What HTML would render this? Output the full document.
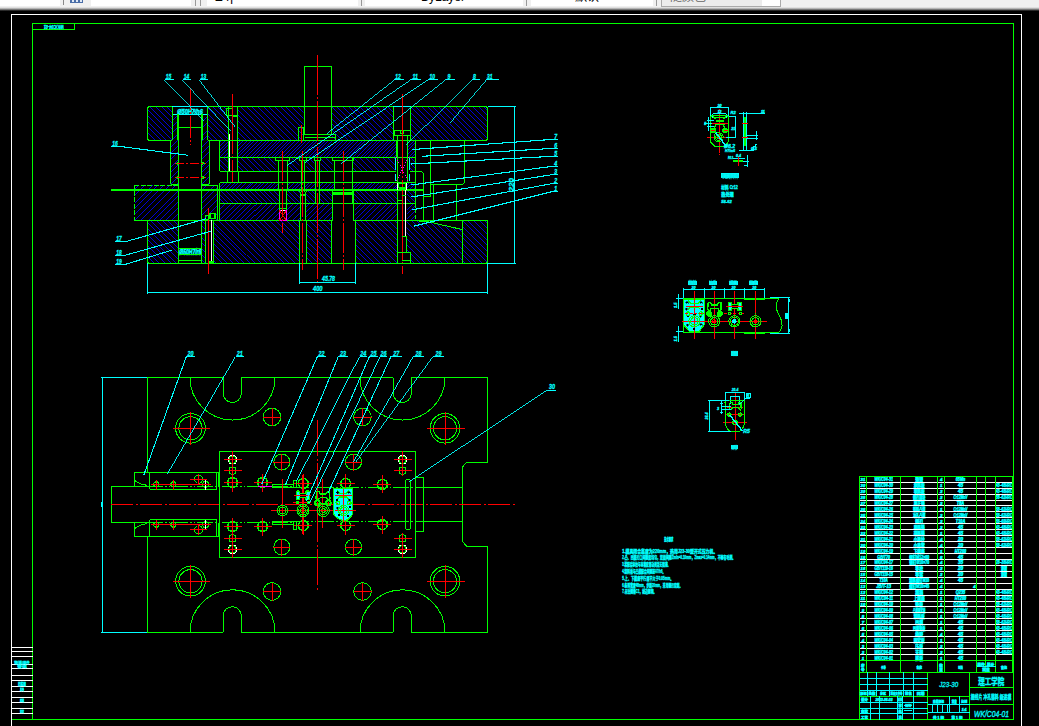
<!DOCTYPE html>
<html lang="zh"><head><meta charset="utf-8"><title>CAD</title>
<style>
html,body{margin:0;padding:0;background:#000;overflow:hidden}
body{width:1039px;height:726px;position:relative;font-family:"Liberation Sans","Noto Sans CJK SC",sans-serif}
#tb{position:absolute;left:0;top:0;width:1039px;height:11px;background:linear-gradient(#f0f0f0 0,#f0f0f0 7px,#cfcfcf 8px,#9a9a9a 9px,#555 10px,#000 11px);overflow:hidden}
#tb div{position:absolute;top:0;height:6px;background:#fff;overflow:hidden}
#tb span{position:absolute;font-size:12px;line-height:12px;top:-9px;color:#000;white-space:nowrap}
svg{position:absolute;left:0;top:0}
svg text{font-family:"Liberation Sans","Noto Sans CJK SC",sans-serif}
</style></head><body>
<svg width="1039" height="726" viewBox="0 0 1039 726" shape-rendering="crispEdges">
<clipPath id="ch1">
<polygon points="147.5,106.7 172.4,106.7 172.4,140.3 147.5,140.3"/>
<polygon points="207.5,106.7 228.2,106.7 228.2,140.3 207.5,140.3"/>
<polygon points="237.7,106.7 303.5,106.7 303.5,140.3 237.7,140.3"/>
<polygon points="331.5,106.7 393.4,106.7 393.4,140.3 331.5,140.3"/>
<polygon points="410.6,106.7 487.5,106.7 487.5,140.3 410.6,140.3"/>
<polygon points="219.5,157.3 228.2,157.3 228.2,171 219.5,171"/>
<polygon points="237.7,157.3 275.7,157.3 275.7,171 237.7,171"/>
<polygon points="289,157.3 299.4,157.3 299.4,171 289,171"/>
<polygon points="306.3,157.3 314.3,157.3 314.3,171 306.3,171"/>
<polygon points="320.7,157.3 332.4,157.3 332.4,171 320.7,171"/>
<polygon points="352.8,157.3 395.5,157.3 395.5,171 352.8,171"/>
<polygon points="409.5,157.3 415.4,157.3 415.4,171 409.5,171"/>
<polygon points="147.8,220.5 178.8,220.5 178.8,263.2 147.8,263.2"/>
<polygon points="213,220.5 299.4,220.5 299.4,263.2 213,263.2"/>
<polygon points="201.7,220.5 205.5,220.5 205.5,263.2 201.7,263.2"/>
<polygon points="306.9,220.5 331,220.5 331,263.2 306.9,263.2"/>
<polygon points="355.5,220.5 397.5,220.5 397.5,263.2 355.5,263.2"/>
<polygon points="406.5,220.5 427,221.5 461.6,229.4 462.3,263.2 410,263.2 410,252.8 406.5,252.8"/>
<polygon points="462.4,220.5 487.5,220.5 487.5,263.2 462.4,263.2"/>
</clipPath>
<path clip-path="url(#ch1)" d="M-14,106.7L142.5,263.2M-8.34,106.7L148.16,263.2M-2.68,106.7L153.82,263.2M2.98,106.7L159.48,263.2M8.64,106.7L165.14,263.2M14.3,106.7L170.8,263.2M19.96,106.7L176.46,263.2M25.62,106.7L182.12,263.2M31.28,106.7L187.78,263.2M36.94,106.7L193.44,263.2M42.6,106.7L199.1,263.2M48.26,106.7L204.76,263.2M53.92,106.7L210.42,263.2M59.58,106.7L216.08,263.2M65.24,106.7L221.74,263.2M70.9,106.7L227.4,263.2M76.56,106.7L233.06,263.2M82.22,106.7L238.72,263.2M87.88,106.7L244.38,263.2M93.54,106.7L250.04,263.2M99.2,106.7L255.7,263.2M104.86,106.7L261.36,263.2M110.52,106.7L267.02,263.2M116.18,106.7L272.68,263.2M121.84,106.7L278.34,263.2M127.5,106.7L284,263.2M133.16,106.7L289.66,263.2M138.82,106.7L295.32,263.2M144.48,106.7L300.98,263.2M150.14,106.7L306.64,263.2M155.8,106.7L312.3,263.2M161.46,106.7L317.96,263.2M167.12,106.7L323.62,263.2M172.78,106.7L329.28,263.2M178.44,106.7L334.94,263.2M184.1,106.7L340.6,263.2M189.76,106.7L346.26,263.2M195.42,106.7L351.92,263.2M201.08,106.7L357.58,263.2M206.74,106.7L363.24,263.2M212.4,106.7L368.9,263.2M218.06,106.7L374.56,263.2M223.72,106.7L380.22,263.2M229.38,106.7L385.88,263.2M235.04,106.7L391.54,263.2M240.7,106.7L397.2,263.2M246.36,106.7L402.86,263.2M252.02,106.7L408.52,263.2M257.68,106.7L414.18,263.2M263.34,106.7L419.84,263.2M269,106.7L425.5,263.2M274.66,106.7L431.16,263.2M280.32,106.7L436.82,263.2M285.98,106.7L442.48,263.2M291.64,106.7L448.14,263.2M297.3,106.7L453.8,263.2M302.96,106.7L459.46,263.2M308.62,106.7L465.12,263.2M314.28,106.7L470.78,263.2M319.94,106.7L476.44,263.2M325.6,106.7L482.1,263.2M331.26,106.7L487.76,263.2M336.92,106.7L493.42,263.2M342.58,106.7L499.08,263.2M348.24,106.7L504.74,263.2M353.9,106.7L510.4,263.2M359.56,106.7L516.06,263.2M365.22,106.7L521.72,263.2M370.88,106.7L527.38,263.2M376.54,106.7L533.04,263.2M382.2,106.7L538.7,263.2M387.86,106.7L544.36,263.2M393.52,106.7L550.02,263.2M399.18,106.7L555.68,263.2M404.84,106.7L561.34,263.2M410.5,106.7L567,263.2M416.16,106.7L572.66,263.2M421.82,106.7L578.32,263.2M427.48,106.7L583.98,263.2M433.14,106.7L589.64,263.2M438.8,106.7L595.3,263.2M444.46,106.7L600.96,263.2M450.12,106.7L606.62,263.2M455.78,106.7L612.28,263.2M461.44,106.7L617.94,263.2M467.1,106.7L623.6,263.2M472.76,106.7L629.26,263.2M478.42,106.7L634.92,263.2M484.08,106.7L640.58,263.2M489.74,106.7L646.24,263.2M495.4,106.7L651.9,263.2M501.06,106.7L657.56,263.2M506.72,106.7L663.22,263.2M512.38,106.7L668.88,263.2M518.04,106.7L674.54,263.2M523.7,106.7L680.2,263.2M529.36,106.7L685.86,263.2M535.02,106.7L691.52,263.2M540.68,106.7L697.18,263.2M546.34,106.7L702.84,263.2M552,106.7L708.5,263.2M557.66,106.7L714.16,263.2M563.32,106.7L719.82,263.2M568.98,106.7L725.48,263.2M574.64,106.7L731.14,263.2M580.3,106.7L736.8,263.2M585.96,106.7L742.46,263.2M591.62,106.7L748.12,263.2M597.28,106.7L753.78,263.2M602.94,106.7L759.44,263.2M608.6,106.7L765.1,263.2M614.26,106.7L770.76,263.2M619.92,106.7L776.42,263.2M625.58,106.7L782.08,263.2M631.24,106.7L787.74,263.2M636.9,106.7L793.4,263.2M642.56,106.7L799.06,263.2M648.22,106.7L804.72,263.2" stroke="#0000ff" stroke-width="0.85" fill="none"/>
<clipPath id="ch5">
<polygon points="170.3,140.3 178.6,140.3 178.6,184.5 170.3,184.5"/>
<polygon points="172.4,114.3 177.2,114.3 177.2,140.3 172.4,140.3"/>
<polygon points="202.8,114.3 207.5,114.3 207.5,140.3 202.8,140.3"/>
<polygon points="201.6,140.3 209.6,140.3 209.6,184.5 201.6,184.5"/>
<polygon points="134.2,185 178.8,185 178.8,220.5 134.2,220.5"/>
<polygon points="201.7,185 217.8,185 217.8,220.5 201.7,220.5"/>
</clipPath>
<path clip-path="url(#ch5)" d="M23,220.5L129.2,114.3M29.2,220.5L135.4,114.3M35.4,220.5L141.6,114.3M41.6,220.5L147.8,114.3M47.8,220.5L154,114.3M54,220.5L160.2,114.3M60.2,220.5L166.4,114.3M66.4,220.5L172.6,114.3M72.6,220.5L178.8,114.3M78.8,220.5L185,114.3M85,220.5L191.2,114.3M91.2,220.5L197.4,114.3M97.4,220.5L203.6,114.3M103.6,220.5L209.8,114.3M109.8,220.5L216,114.3M116,220.5L222.2,114.3M122.2,220.5L228.4,114.3M128.4,220.5L234.6,114.3M134.6,220.5L240.8,114.3M140.8,220.5L247,114.3M147,220.5L253.2,114.3M153.2,220.5L259.4,114.3M159.4,220.5L265.6,114.3M165.6,220.5L271.8,114.3M171.8,220.5L278,114.3M178,220.5L284.2,114.3M184.2,220.5L290.4,114.3M190.4,220.5L296.6,114.3M196.6,220.5L302.8,114.3M202.8,220.5L309,114.3M209,220.5L315.2,114.3M215.2,220.5L321.4,114.3M221.4,220.5L327.6,114.3M227.6,220.5L333.8,114.3M233.8,220.5L340,114.3M240,220.5L346.2,114.3M246.2,220.5L352.4,114.3M252.4,220.5L358.6,114.3M258.6,220.5L364.8,114.3M264.8,220.5L371,114.3M271,220.5L377.2,114.3M277.2,220.5L383.4,114.3M283.4,220.5L389.6,114.3M289.6,220.5L395.8,114.3M295.8,220.5L402,114.3M302,220.5L408.2,114.3M308.2,220.5L414.4,114.3M314.4,220.5L420.6,114.3M320.6,220.5L426.8,114.3M326.8,220.5L433,114.3" stroke="#0000ff" stroke-width="0.85" fill="none"/>
<clipPath id="ch2">
<polygon points="219.5,140.3 228.2,140.3 228.2,157.3 219.5,157.3"/>
<polygon points="237.7,140.3 396,140.3 396,157.3 237.7,157.3"/>
<polygon points="407.2,140.3 415.4,140.3 415.4,157.3 407.2,157.3"/>
<polygon points="219.5,182.5 278,182.5 278,190 219.5,190"/>
<polygon points="287.7,182.5 301.2,182.5 301.2,190 287.7,190"/>
<polygon points="304.9,182.5 315.5,182.5 315.5,190 304.9,190"/>
<polygon points="319.8,182.5 334,182.5 334,190 319.8,190"/>
<polygon points="352.8,182.5 397,182.5 397,190 352.8,190"/>
<polygon points="407,182.5 415.4,182.5 415.4,190 407,190"/>
</clipPath>
<path clip-path="url(#ch2)" d="M164.8,190L214.5,140.3M168.5,190L218.2,140.3M172.2,190L221.9,140.3M175.9,190L225.6,140.3M179.6,190L229.3,140.3M183.3,190L233,140.3M187,190L236.7,140.3M190.7,190L240.4,140.3M194.4,190L244.1,140.3M198.1,190L247.8,140.3M201.8,190L251.5,140.3M205.5,190L255.2,140.3M209.2,190L258.9,140.3M212.9,190L262.6,140.3M216.6,190L266.3,140.3M220.3,190L270,140.3M224,190L273.7,140.3M227.7,190L277.4,140.3M231.4,190L281.1,140.3M235.1,190L284.8,140.3M238.8,190L288.5,140.3M242.5,190L292.2,140.3M246.2,190L295.9,140.3M249.9,190L299.6,140.3M253.6,190L303.3,140.3M257.3,190L307,140.3M261,190L310.7,140.3M264.7,190L314.4,140.3M268.4,190L318.1,140.3M272.1,190L321.8,140.3M275.8,190L325.5,140.3M279.5,190L329.2,140.3M283.2,190L332.9,140.3M286.9,190L336.6,140.3M290.6,190L340.3,140.3M294.3,190L344,140.3M298,190L347.7,140.3M301.7,190L351.4,140.3M305.4,190L355.1,140.3M309.1,190L358.8,140.3M312.8,190L362.5,140.3M316.5,190L366.2,140.3M320.2,190L369.9,140.3M323.9,190L373.6,140.3M327.6,190L377.3,140.3M331.3,190L381,140.3M335,190L384.7,140.3M338.7,190L388.4,140.3M342.4,190L392.1,140.3M346.1,190L395.8,140.3M349.8,190L399.5,140.3M353.5,190L403.2,140.3M357.2,190L406.9,140.3M360.9,190L410.6,140.3M364.6,190L414.3,140.3M368.3,190L418,140.3M372,190L421.7,140.3M375.7,190L425.4,140.3M379.4,190L429.1,140.3M383.1,190L432.8,140.3M386.8,190L436.5,140.3M390.5,190L440.2,140.3M394.2,190L443.9,140.3M397.9,190L447.6,140.3M401.6,190L451.3,140.3M405.3,190L455,140.3M409,190L458.7,140.3M412.7,190L462.4,140.3M416.4,190L466.1,140.3M420.1,190L469.8,140.3M423.8,190L473.5,140.3M427.5,190L477.2,140.3M431.2,190L480.9,140.3M434.9,190L484.6,140.3M438.6,190L488.3,140.3M442.3,190L492,140.3M446,190L495.7,140.3M449.7,190L499.4,140.3M453.4,190L503.1,140.3M457.1,190L506.8,140.3M460.8,190L510.5,140.3M464.5,190L514.2,140.3M468.2,190L517.9,140.3" stroke="#0000ff" stroke-width="0.85" fill="none"/>
<clipPath id="ch4">
<polygon points="219.5,190 279.4,190 279.4,203.5 219.5,203.5"/>
<polygon points="286.3,190 300.5,190 300.5,203.5 286.3,203.5"/>
<polygon points="305.6,190 315.5,190 315.5,203.5 305.6,203.5"/>
<polygon points="319.8,190 332.4,190 332.4,203.5 319.8,203.5"/>
<polygon points="352.8,190 397.5,190 397.5,203.5 352.8,203.5"/>
<polygon points="407,190 415.4,190 415.4,203.5 407,203.5"/>
</clipPath>
<path clip-path="url(#ch4)" d="M201,190L214.5,203.5M205.8,190L219.3,203.5M210.6,190L224.1,203.5M215.4,190L228.9,203.5M220.2,190L233.7,203.5M225,190L238.5,203.5M229.8,190L243.3,203.5M234.6,190L248.1,203.5M239.4,190L252.9,203.5M244.2,190L257.7,203.5M249,190L262.5,203.5M253.8,190L267.3,203.5M258.6,190L272.1,203.5M263.4,190L276.9,203.5M268.2,190L281.7,203.5M273,190L286.5,203.5M277.8,190L291.3,203.5M282.6,190L296.1,203.5M287.4,190L300.9,203.5M292.2,190L305.7,203.5M297,190L310.5,203.5M301.8,190L315.3,203.5M306.6,190L320.1,203.5M311.4,190L324.9,203.5M316.2,190L329.7,203.5M321,190L334.5,203.5M325.8,190L339.3,203.5M330.6,190L344.1,203.5M335.4,190L348.9,203.5M340.2,190L353.7,203.5M345,190L358.5,203.5M349.8,190L363.3,203.5M354.6,190L368.1,203.5M359.4,190L372.9,203.5M364.2,190L377.7,203.5M369,190L382.5,203.5M373.8,190L387.3,203.5M378.6,190L392.1,203.5M383.4,190L396.9,203.5M388.2,190L401.7,203.5M393,190L406.5,203.5M397.8,190L411.3,203.5M402.6,190L416.1,203.5M407.4,190L420.9,203.5M412.2,190L425.7,203.5M417,190L430.5,203.5M421.8,190L435.3,203.5M426.6,190L440.1,203.5M431.4,190L444.9,203.5" stroke="#0000ff" stroke-width="0.85" fill="none"/>
<clipPath id="ch3">
<polygon points="219.5,203.5 279.4,203.5 279.4,220.5 219.5,220.5"/>
<polygon points="286.3,203.5 300.5,203.5 300.5,220.5 286.3,220.5"/>
<polygon points="305.6,203.5 332.4,203.5 332.4,220.5 305.6,220.5"/>
<polygon points="354.8,203.5 397.5,203.5 397.5,220.5 354.8,220.5"/>
<polygon points="407,203.5 415.4,203.5 415.4,220.5 407,220.5"/>
</clipPath>
<path clip-path="url(#ch3)" d="M197.5,220.5L214.5,203.5M202.7,220.5L219.7,203.5M207.9,220.5L224.9,203.5M213.1,220.5L230.1,203.5M218.3,220.5L235.3,203.5M223.5,220.5L240.5,203.5M228.7,220.5L245.7,203.5M233.9,220.5L250.9,203.5M239.1,220.5L256.1,203.5M244.3,220.5L261.3,203.5M249.5,220.5L266.5,203.5M254.7,220.5L271.7,203.5M259.9,220.5L276.9,203.5M265.1,220.5L282.1,203.5M270.3,220.5L287.3,203.5M275.5,220.5L292.5,203.5M280.7,220.5L297.7,203.5M285.9,220.5L302.9,203.5M291.1,220.5L308.1,203.5M296.3,220.5L313.3,203.5M301.5,220.5L318.5,203.5M306.7,220.5L323.7,203.5M311.9,220.5L328.9,203.5M317.1,220.5L334.1,203.5M322.3,220.5L339.3,203.5M327.5,220.5L344.5,203.5M332.7,220.5L349.7,203.5M337.9,220.5L354.9,203.5M343.1,220.5L360.1,203.5M348.3,220.5L365.3,203.5M353.5,220.5L370.5,203.5M358.7,220.5L375.7,203.5M363.9,220.5L380.9,203.5M369.1,220.5L386.1,203.5M374.3,220.5L391.3,203.5M379.5,220.5L396.5,203.5M384.7,220.5L401.7,203.5M389.9,220.5L406.9,203.5M395.1,220.5L412.1,203.5M400.3,220.5L417.3,203.5M405.5,220.5L422.5,203.5M410.7,220.5L427.7,203.5M415.9,220.5L432.9,203.5M421.1,220.5L438.1,203.5M426.3,220.5L443.3,203.5M431.5,220.5L448.5,203.5M436.7,220.5L453.7,203.5" stroke="#0000ff" stroke-width="0.85" fill="none"/>
<line x1="11" y1="14.5" x2="1021.5" y2="14.5" stroke="#ffffff" stroke-width="1"/>
<line x1="11.5" y1="14" x2="11.5" y2="726" stroke="#ffffff" stroke-width="1"/>
<line x1="1021" y1="14" x2="1021" y2="726" stroke="#ffffff" stroke-width="1"/>
<line x1="32" y1="23.5" x2="1013.5" y2="23.5" stroke="#00ff00" stroke-width="1"/>
<line x1="32.5" y1="23" x2="32.5" y2="719.5" stroke="#00ff00" stroke-width="1"/>
<line x1="1013" y1="23" x2="1013" y2="719.5" stroke="#00ff00" stroke-width="1"/>
<line x1="12" y1="719.5" x2="1013.5" y2="719.5" stroke="#00ff00" stroke-width="1"/>
<rect x="32.5" y="23.5" width="42" height="6" stroke="#00ff00" stroke-width="1" fill="none"/>
<text x="53.75" y="27.9" font-size="4.6" fill="#00ffff" text-anchor="middle" font-weight="bold" font-style="italic" transform="rotate(180 53.75 26.3)" stroke="#00ffff" stroke-width="0.35" textLength="20" lengthAdjust="spacingAndGlyphs">WK/C04-01</text>
<line x1="12" y1="647.5" x2="33" y2="647.5" stroke="#ffffff" stroke-width="1"/>
<line x1="12" y1="651.5" x2="33" y2="651.5" stroke="#ffffff" stroke-width="1"/>
<line x1="12" y1="656.5" x2="33" y2="656.5" stroke="#ffffff" stroke-width="1"/>
<line x1="12" y1="664.5" x2="33" y2="664.5" stroke="#ffffff" stroke-width="1"/>
<line x1="12" y1="668.5" x2="33" y2="668.5" stroke="#ffffff" stroke-width="1"/>
<line x1="12" y1="675.5" x2="33" y2="675.5" stroke="#ffffff" stroke-width="1"/>
<line x1="12" y1="680.5" x2="33" y2="680.5" stroke="#ffffff" stroke-width="1"/>
<line x1="12" y1="686.5" x2="33" y2="686.5" stroke="#ffffff" stroke-width="1"/>
<line x1="12" y1="691.5" x2="33" y2="691.5" stroke="#ffffff" stroke-width="1"/>
<line x1="12" y1="697.5" x2="33" y2="697.5" stroke="#ffffff" stroke-width="1"/>
<line x1="12" y1="702.5" x2="33" y2="702.5" stroke="#ffffff" stroke-width="1"/>
<line x1="12" y1="708.5" x2="33" y2="708.5" stroke="#ffffff" stroke-width="1"/>
<line x1="12" y1="713.5" x2="33" y2="713.5" stroke="#ffffff" stroke-width="1"/>
<path d="M149.5,106.7 H485.5 Q487.5,106.7 487.5,108.7 V138.3 Q487.5,140.3 485.5,140.3 H207.5 M172.4,140.3 H149.5 Q147.5,140.3 147.5,138.3 V108.7 Q147.5,106.7 149.5,106.7" stroke="#00ff00" stroke-width="1" fill="none"/>
<rect x="172.4" y="106.7" width="35.1" height="7.6" stroke="#00ffff" stroke-width="1" fill="none"/>
<text x="177.3" y="113.6" font-size="7.2" fill="#00ffff" text-anchor="start" font-weight="bold" font-style="italic" textLength="25.5" lengthAdjust="spacingAndGlyphs" stroke="#00ffff" stroke-width="0.5">Ø50H7/h6</text>
<line x1="172.4" y1="106.7" x2="172.4" y2="140.3" stroke="#00ff00" stroke-width="1"/>
<line x1="207.5" y1="106.7" x2="207.5" y2="140.3" stroke="#00ff00" stroke-width="1"/>
<line x1="177.2" y1="114.3" x2="177.2" y2="140.3" stroke="#00ff00" stroke-width="1"/>
<line x1="202.8" y1="114.3" x2="202.8" y2="140.3" stroke="#00ff00" stroke-width="1"/>
<path d="M170.3,140.3 V183.5 L171.3,184.5 H178.6 M209.6,140.3 V183.5 L208.6,184.5 H201.6" stroke="#00ff00" stroke-width="1" fill="none"/>
<line x1="170.3" y1="140.3" x2="172.4" y2="140.3" stroke="#00ff00" stroke-width="1"/>
<line x1="207.5" y1="140.3" x2="209.6" y2="140.3" stroke="#00ff00" stroke-width="1"/>
<line x1="178.6" y1="114.3" x2="178.6" y2="263.2" stroke="#00ff00" stroke-width="1"/>
<line x1="201.6" y1="114.3" x2="201.6" y2="263.2" stroke="#00ff00" stroke-width="1"/>
<line x1="178.6" y1="127.6" x2="201.6" y2="127.6" stroke="#00ff00" stroke-width="1"/>
<line x1="174.5" y1="163.4" x2="206" y2="163.4" stroke="#ff0000" stroke-width="1" stroke-dasharray="9 2 2 2"/>
<path d="M178.6,161.4 L176.3,163.4 L178.6,165.4 M201.6,161.4 L203.9,163.4 L201.6,165.4" stroke="#00ff00" stroke-width="1" fill="none"/>
<line x1="174.5" y1="177.5" x2="206" y2="177.5" stroke="#ff0000" stroke-width="1" stroke-dasharray="9 2 2 2"/>
<path d="M178.6,175.5 L176.3,177.5 L178.6,179.5 M201.6,175.5 L203.9,177.5 L201.6,179.5" stroke="#00ff00" stroke-width="1" fill="none"/>
<line x1="190.2" y1="87.5" x2="190.2" y2="144.5" stroke="#ff0000" stroke-width="1" stroke-dasharray="22 2 2 2"/>
<line x1="228.2" y1="106.7" x2="228.2" y2="171" stroke="#00ff00" stroke-width="1"/>
<line x1="237.4" y1="106.7" x2="237.4" y2="171" stroke="#00ff00" stroke-width="1"/>
<rect x="226" y="108.8" width="6.6" height="6.9" stroke="#00ff00" stroke-width="1" fill="none"/>
<line x1="232.6" y1="115.7" x2="237.4" y2="115.7" stroke="#00ff00" stroke-width="1.6"/>
<line x1="232.6" y1="94" x2="232.6" y2="183" stroke="#ff0000" stroke-width="1" stroke-dasharray="60 2 2 2"/>
<line x1="229.6" y1="134.3" x2="229.6" y2="171.4" stroke="#ffffff" stroke-width="1"/>
<line x1="232.6" y1="157.3" x2="237.4" y2="157.3" stroke="#00ff00" stroke-width="1.6"/>
<line x1="227" y1="171" x2="227" y2="182.5" stroke="#00ff00" stroke-width="1"/>
<line x1="238.5" y1="171" x2="238.5" y2="182.5" stroke="#00ff00" stroke-width="1"/>
<line x1="219.5" y1="140.3" x2="464.5" y2="140.3" stroke="#00ff00" stroke-width="1"/>
<line x1="219.5" y1="157.3" x2="415.4" y2="157.3" stroke="#00ff00" stroke-width="1"/>
<line x1="219.5" y1="171" x2="395.5" y2="171" stroke="#00ff00" stroke-width="1"/>
<line x1="409.5" y1="171" x2="421" y2="171" stroke="#00ff00" stroke-width="1"/>
<line x1="219.5" y1="140.3" x2="219.5" y2="171" stroke="#00ff00" stroke-width="1"/>
<line x1="209.6" y1="140.3" x2="219.5" y2="140.3" stroke="#00ff00" stroke-width="1"/>
<line x1="219.5" y1="182.5" x2="415.4" y2="182.5" stroke="#00ff00" stroke-width="1"/>
<line x1="219.5" y1="182.5" x2="219.5" y2="220.5" stroke="#00ff00" stroke-width="1"/>
<line x1="111" y1="190" x2="423" y2="190" stroke="#00ff00" stroke-width="2.2"/>
<rect x="134.2" y="185" width="44.6" height="35.5" stroke="#00ff00" stroke-width="1" fill="none" stroke-dasharray="5 1.5"/>
<path d="M201.7,185 H217.8 V220.5" stroke="#00ff00" stroke-width="1" fill="none"/>
<line x1="219.5" y1="203.5" x2="415.4" y2="203.5" stroke="#00ff00" stroke-width="1"/>
<line x1="134.2" y1="220.5" x2="487.5" y2="220.5" stroke="#00ff00" stroke-width="1"/>
<path d="M147.8,220.5 V262.2 L148.8,263.2 H485.5 Q487.5,263.2 487.5,261.2 V222.5 Q487.5,220.5 485.5,220.5" stroke="#00ff00" stroke-width="1" fill="none"/>
<text x="179.3" y="254.8" font-size="8.6" fill="#00ffff" text-anchor="start" font-weight="bold" font-style="italic" textLength="22" lengthAdjust="spacingAndGlyphs" stroke="#00ffff" stroke-width="0.6">Ø50H7/r6</text>
<line x1="178.6" y1="248" x2="201.6" y2="248" stroke="#00ff00" stroke-width="1"/>
<line x1="178.6" y1="254.9" x2="201.6" y2="254.9" stroke="#00ff00" stroke-width="1"/>
<line x1="178.6" y1="260.5" x2="201.6" y2="260.5" stroke="#00ff00" stroke-width="1"/>
<line x1="208.5" y1="208" x2="208.5" y2="273.5" stroke="#ff0000" stroke-width="1"/>
<rect x="205.5" y="215.4" width="3.1" height="4.5" stroke="#00ff00" stroke-width="1" fill="none"/>
<rect x="210" y="213.6" width="4.8" height="4.8" stroke="#00ff00" stroke-width="1.5" fill="#000"/>
<line x1="205.5" y1="215.4" x2="205.5" y2="263.2" stroke="#00ff00" stroke-width="1"/>
<line x1="213" y1="220.5" x2="213" y2="263.2" stroke="#00ff00" stroke-width="1"/>
<line x1="211.5" y1="219.5" x2="211.5" y2="263.2" stroke="#ffffff" stroke-width="1.2"/>
<rect x="208.6" y="261.2" width="4.6" height="2.5" fill="#00ff00"/>
<rect x="304.5" y="66" width="26.5" height="40.7" stroke="#00ff00" stroke-width="1" fill="none"/>
<line x1="304.5" y1="106.7" x2="304.5" y2="134.3" stroke="#00ff00" stroke-width="1"/>
<line x1="331.5" y1="106.7" x2="331.5" y2="134.3" stroke="#00ff00" stroke-width="1"/>
<line x1="304.5" y1="106.7" x2="331" y2="106.7" stroke="#00ff00" stroke-width="1.4"/>
<rect x="303.5" y="134.3" width="31.7" height="6" stroke="#00ff00" stroke-width="1" fill="none"/>
<line x1="305" y1="137" x2="335.2" y2="137" stroke="#00ff00" stroke-width="1"/>
<rect x="298.7" y="127.4" width="4.8" height="12.9" stroke="#00ff00" stroke-width="1" fill="none"/>
<line x1="301.6" y1="125" x2="301.6" y2="143" stroke="#ff0000" stroke-width="1"/>
<line x1="317.6" y1="55" x2="317.6" y2="282" stroke="#ff0000" stroke-width="1" stroke-dasharray="40 2 2 2"/>
<rect x="275.7" y="157.3" width="13.3" height="3.1" stroke="#00ff00" stroke-width="1" fill="none"/>
<line x1="278" y1="160.4" x2="278" y2="190" stroke="#00ff00" stroke-width="1"/>
<line x1="287.7" y1="160.4" x2="287.7" y2="190" stroke="#00ff00" stroke-width="1"/>
<line x1="279.4" y1="190" x2="279.4" y2="210.5" stroke="#00ff00" stroke-width="1"/>
<line x1="286.3" y1="190" x2="286.3" y2="210.5" stroke="#00ff00" stroke-width="1"/>
<line x1="279.4" y1="208.7" x2="286.3" y2="208.7" stroke="#00ff00" stroke-width="1"/>
<rect x="279.4" y="210.5" width="6.9" height="10" stroke="#ff00ff" stroke-width="1" fill="none"/>
<path d="M279.4,210.5 L286.3,220.5 M286.3,210.5 L279.4,220.5" stroke="#ff0000" stroke-width="1" fill="none"/>
<line x1="280.5" y1="210.8" x2="285" y2="210.8" stroke="#ffffff" stroke-width="1"/>
<line x1="282.4" y1="150.8" x2="282.4" y2="232.8" stroke="#ff0000" stroke-width="1" stroke-dasharray="30 2 2 2"/>
<rect x="299.4" y="157.3" width="6.9" height="3.1" stroke="#00ff00" stroke-width="1" fill="none"/>
<line x1="301.2" y1="160.4" x2="301.2" y2="192" stroke="#00ff00" stroke-width="1"/>
<line x1="304.9" y1="160.4" x2="304.9" y2="192" stroke="#00ff00" stroke-width="1"/>
<path d="M298.5,190 L300.5,193 V220.5 M307.5,190 L305.6,193 V220.5" stroke="#00ff00" stroke-width="1" fill="none"/>
<line x1="300.5" y1="195" x2="305.6" y2="195" stroke="#00ff00" stroke-width="1.6"/>
<line x1="299.4" y1="220.5" x2="299.4" y2="263.2" stroke="#00ff00" stroke-width="1"/>
<line x1="306.9" y1="220.5" x2="306.9" y2="263.2" stroke="#00ff00" stroke-width="1"/>
<line x1="302.5" y1="150.8" x2="302.5" y2="270.4" stroke="#ff0000" stroke-width="1" stroke-dasharray="30 2 2 2"/>
<rect x="314.3" y="157.3" width="6.4" height="3.1" stroke="#00ff00" stroke-width="1" fill="none"/>
<line x1="315.5" y1="160.4" x2="315.5" y2="203.5" stroke="#00ff00" stroke-width="1"/>
<line x1="319.8" y1="160.4" x2="319.8" y2="203.5" stroke="#00ff00" stroke-width="1"/>
<rect x="332.4" y="157.3" width="21.4" height="3.1" stroke="#00ff00" stroke-width="1" fill="none"/>
<line x1="334" y1="160.4" x2="334" y2="190" stroke="#00ff00" stroke-width="1"/>
<line x1="352" y1="160.4" x2="352" y2="190" stroke="#00ff00" stroke-width="1"/>
<rect x="332.4" y="191.5" width="21.4" height="71.7" fill="#000"/>
<rect x="333" y="192" width="20.5" height="3" fill="#00ff00"/>
<line x1="332.4" y1="190" x2="332.4" y2="220.5" stroke="#00ff00" stroke-width="1"/>
<line x1="353.8" y1="190" x2="353.8" y2="220.5" stroke="#00ff00" stroke-width="1"/>
<line x1="331" y1="220.5" x2="331" y2="263.2" stroke="#00ff00" stroke-width="1"/>
<line x1="355.5" y1="220.5" x2="355.5" y2="263.2" stroke="#00ff00" stroke-width="1"/>
<line x1="332.4" y1="203.5" x2="353.8" y2="203.5" stroke="#00ff00" stroke-width="1"/>
<line x1="343.7" y1="150.8" x2="343.7" y2="270" stroke="#ff0000" stroke-width="1" stroke-dasharray="30 2 2 2"/>
<line x1="352.8" y1="157.3" x2="352.8" y2="203.5" stroke="#00ff00" stroke-width="1"/>
<rect x="393.4" y="106.7" width="17.2" height="33.6" fill="#000"/>
<line x1="393.4" y1="106.7" x2="393.4" y2="140.3" stroke="#00ff00" stroke-width="1"/>
<line x1="410.6" y1="106.7" x2="410.6" y2="140.3" stroke="#00ff00" stroke-width="1"/>
<line x1="393.4" y1="106.7" x2="410.6" y2="106.7" stroke="#00ffff" stroke-width="1"/>
<rect x="394" y="130.5" width="16" height="5.1" stroke="#00ff00" stroke-width="1" fill="none"/>
<rect x="400.8" y="130.5" width="3" height="2.5" stroke="#00ff00" stroke-width="1" fill="none"/>
<line x1="397.2" y1="135.6" x2="397.2" y2="182.5" stroke="#00ff00" stroke-width="1"/>
<line x1="407.2" y1="135.6" x2="407.2" y2="182.5" stroke="#00ff00" stroke-width="1"/>
<line x1="396" y1="140.3" x2="396" y2="157.3" stroke="#00ff00" stroke-width="1"/>
<line x1="402.3" y1="94" x2="402.3" y2="273.5" stroke="#ff0000" stroke-width="1" stroke-dasharray="80 2 2 2"/>
<path d="M396,157.3 L408.5,182 M408.5,157.3 L396,182" stroke="#ff00ff" stroke-width="1" fill="none" stroke-dasharray="1.2 1.6"/>
<line x1="395.5" y1="158" x2="395.5" y2="169.5" stroke="#00ffff" stroke-width="1"/>
<line x1="395.5" y1="174" x2="395.5" y2="181" stroke="#00ffff" stroke-width="1"/>
<line x1="409.5" y1="158" x2="409.5" y2="169.5" stroke="#00ffff" stroke-width="1"/>
<line x1="409.5" y1="174" x2="409.5" y2="181" stroke="#00ffff" stroke-width="1"/>
<path d="M397.5,182.5 V190 M406.8,182.5 V190" stroke="#ffffff" stroke-width="1.3" fill="none"/>
<rect x="398.5" y="187.2" width="7.5" height="2.8" fill="#00ff00"/>
<rect x="398.8" y="183.5" width="6.8" height="3.7" stroke="#00ff00" stroke-width="1" fill="none"/>
<line x1="397.5" y1="190" x2="397.5" y2="263.2" stroke="#00ff00" stroke-width="1"/>
<line x1="405.5" y1="190" x2="405.5" y2="236.6" stroke="#ffffff" stroke-width="1.3"/>
<line x1="406.5" y1="236.6" x2="406.5" y2="252.8" stroke="#00ff00" stroke-width="1"/>
<line x1="402.3" y1="236.6" x2="406.5" y2="236.6" stroke="#00ff00" stroke-width="1"/>
<rect x="397.5" y="252.8" width="12.5" height="10.4" stroke="#00ff00" stroke-width="1" fill="none"/>
<line x1="402.3" y1="260.4" x2="410" y2="260.4" stroke="#00ff00" stroke-width="1"/>
<line x1="397.5" y1="200.5" x2="402" y2="200.5" stroke="#00ff00" stroke-width="1.6"/>
<line x1="402.3" y1="195.5" x2="406" y2="195.5" stroke="#00ff00" stroke-width="1"/>
<line x1="415.4" y1="140.3" x2="415.4" y2="171" stroke="#00ff00" stroke-width="1"/>
<path d="M415.4,171 H421 L423.7,174 V220.5" stroke="#00ff00" stroke-width="1" fill="none"/>
<line x1="415.4" y1="171" x2="415.4" y2="203.5" stroke="#00ff00" stroke-width="1"/>
<line x1="415.4" y1="203.5" x2="415.4" y2="220.5" stroke="#00ff00" stroke-width="1" stroke-dasharray="4 1.5"/>
<line x1="430.6" y1="140.3" x2="430.6" y2="196.3" stroke="#00ff00" stroke-width="1"/>
<line x1="423.7" y1="196.3" x2="430.6" y2="196.3" stroke="#00ff00" stroke-width="1"/>
<path d="M464.5,140.3 V182.5 L462.5,184.5 H430.6" stroke="#00ff00" stroke-width="1" fill="none"/>
<line x1="433.3" y1="184.5" x2="433.3" y2="220.5" stroke="#00ff00" stroke-width="1"/>
<line x1="456.7" y1="184.5" x2="456.7" y2="220.5" stroke="#00ff00" stroke-width="1"/>
<line x1="462.4" y1="220.5" x2="462.4" y2="263.2" stroke="#00ff00" stroke-width="1"/>
<path d="M415,220.8 L427,221.5 L461.6,229.4" stroke="#00ff00" stroke-width="1" fill="none"/>
<line x1="487.5" y1="106.5" x2="515.8" y2="106.5" stroke="#00ffff" stroke-width="1"/>
<line x1="487.5" y1="263.2" x2="515.8" y2="263.2" stroke="#00ffff" stroke-width="1"/>
<line x1="514.5" y1="106.5" x2="514.5" y2="263.2" stroke="#00ffff" stroke-width="1"/>
<line x1="147.7" y1="263.2" x2="147.7" y2="293.5" stroke="#00ffff" stroke-width="1"/>
<line x1="487.5" y1="263.2" x2="487.5" y2="293.5" stroke="#00ffff" stroke-width="1"/>
<line x1="147.7" y1="292.2" x2="487.5" y2="292.2" stroke="#00ffff" stroke-width="1"/>
<line x1="299.6" y1="263.2" x2="299.6" y2="283.5" stroke="#00ffff" stroke-width="1"/>
<line x1="355.5" y1="263.2" x2="355.5" y2="283.5" stroke="#00ffff" stroke-width="1"/>
<line x1="299.6" y1="282.3" x2="355.5" y2="282.3" stroke="#00ffff" stroke-width="1"/>
<text x="322" y="281.3" font-size="6.4" fill="#00ffff" text-anchor="start" font-weight="bold" font-style="italic" textLength="13" lengthAdjust="spacingAndGlyphs" stroke="#00ffff" stroke-width="0.3">45.78</text>
<text x="313" y="291.3" font-size="6.4" fill="#00ffff" text-anchor="start" font-weight="bold" font-style="italic" textLength="9.5" lengthAdjust="spacingAndGlyphs" stroke="#00ffff" stroke-width="0.3">400</text>
<text x="0" y="0" font-size="7" fill="#00ffff" text-anchor="start" font-weight="bold" font-style="italic" transform="translate(513.6 191.6) rotate(-90)" textLength="13.5" lengthAdjust="spacingAndGlyphs" stroke="#00ffff" stroke-width="0.3">220</text>
<line x1="164.5" y1="79.5" x2="173.7" y2="79.5" stroke="#00ffff" stroke-width="1"/>
<line x1="164.5" y1="79.5" x2="205.4" y2="121.2" stroke="#00ffff" stroke-width="0.79"/>
<text x="165.7" y="78.7" font-size="6.6" fill="#00ffff" text-anchor="start" font-weight="bold" font-style="italic" stroke="#00ffff" stroke-width="0.3" textLength="5.4" lengthAdjust="spacingAndGlyphs">15</text>
<line x1="182.5" y1="79.5" x2="190.5" y2="79.5" stroke="#00ffff" stroke-width="1"/>
<line x1="182.5" y1="79.5" x2="231.6" y2="130.8" stroke="#00ffff" stroke-width="0.79"/>
<text x="183.7" y="78.7" font-size="6.6" fill="#00ffff" text-anchor="start" font-weight="bold" font-style="italic" stroke="#00ffff" stroke-width="0.3" textLength="5.4" lengthAdjust="spacingAndGlyphs">14</text>
<line x1="199.5" y1="79.5" x2="208" y2="79.5" stroke="#00ffff" stroke-width="1"/>
<line x1="199.5" y1="79.5" x2="235.7" y2="126.7" stroke="#00ffff" stroke-width="0.87"/>
<text x="200.7" y="78.7" font-size="6.6" fill="#00ffff" text-anchor="start" font-weight="bold" font-style="italic" stroke="#00ffff" stroke-width="0.3" textLength="5.4" lengthAdjust="spacingAndGlyphs">13</text>
<line x1="111" y1="146.3" x2="118.7" y2="146.3" stroke="#00ffff" stroke-width="1"/>
<line x1="118.7" y1="146.3" x2="188.2" y2="155.3" stroke="#00ffff" stroke-width="1.09"/>
<text x="112.2" y="145.5" font-size="6.6" fill="#00ffff" text-anchor="start" font-weight="bold" font-style="italic" stroke="#00ffff" stroke-width="0.3" textLength="5.4" lengthAdjust="spacingAndGlyphs">16</text>
<line x1="115" y1="241.8" x2="125" y2="241.8" stroke="#00ffff" stroke-width="1"/>
<line x1="125" y1="241.8" x2="206" y2="218.8" stroke="#00ffff" stroke-width="1.06"/>
<text x="116.2" y="241" font-size="6.6" fill="#00ffff" text-anchor="start" font-weight="bold" font-style="italic" stroke="#00ffff" stroke-width="0.3" textLength="5.4" lengthAdjust="spacingAndGlyphs">17</text>
<line x1="115" y1="255.3" x2="125" y2="255.3" stroke="#00ffff" stroke-width="1"/>
<line x1="125" y1="255.3" x2="210.9" y2="231.2" stroke="#00ffff" stroke-width="1.06"/>
<text x="116.2" y="254.5" font-size="6.6" fill="#00ffff" text-anchor="start" font-weight="bold" font-style="italic" stroke="#00ffff" stroke-width="0.3" textLength="5.4" lengthAdjust="spacingAndGlyphs">18</text>
<line x1="115" y1="264.5" x2="125" y2="264.5" stroke="#00ffff" stroke-width="1"/>
<line x1="125" y1="264.5" x2="172.3" y2="250" stroke="#00ffff" stroke-width="1.05"/>
<text x="116.2" y="263.7" font-size="6.6" fill="#00ffff" text-anchor="start" font-weight="bold" font-style="italic" stroke="#00ffff" stroke-width="0.3" textLength="5.4" lengthAdjust="spacingAndGlyphs">19</text>
<line x1="394" y1="79.5" x2="404" y2="79.5" stroke="#00ffff" stroke-width="1"/>
<line x1="394" y1="79.5" x2="326.5" y2="133" stroke="#00ffff" stroke-width="0.86"/>
<text x="395.2" y="78.7" font-size="6.6" fill="#00ffff" text-anchor="start" font-weight="bold" font-style="italic" stroke="#00ffff" stroke-width="0.3" textLength="5.4" lengthAdjust="spacingAndGlyphs">12</text>
<line x1="411.2" y1="79.5" x2="421" y2="79.5" stroke="#00ffff" stroke-width="1"/>
<line x1="411.2" y1="79.5" x2="286.6" y2="165.8" stroke="#00ffff" stroke-width="0.9"/>
<text x="412.4" y="78.7" font-size="6.6" fill="#00ffff" text-anchor="start" font-weight="bold" font-style="italic" stroke="#00ffff" stroke-width="0.3" textLength="5.4" lengthAdjust="spacingAndGlyphs">11</text>
<line x1="428.3" y1="79.5" x2="437.8" y2="79.5" stroke="#00ffff" stroke-width="1"/>
<line x1="428.3" y1="79.5" x2="305.4" y2="162.3" stroke="#00ffff" stroke-width="0.91"/>
<text x="429.5" y="78.7" font-size="6.6" fill="#00ffff" text-anchor="start" font-weight="bold" font-style="italic" stroke="#00ffff" stroke-width="0.3" textLength="5.4" lengthAdjust="spacingAndGlyphs">10</text>
<line x1="446" y1="79.5" x2="454.9" y2="79.5" stroke="#00ffff" stroke-width="1"/>
<line x1="446" y1="79.5" x2="340.8" y2="164" stroke="#00ffff" stroke-width="0.86"/>
<text x="447.6" y="78.7" font-size="6.6" fill="#00ffff" text-anchor="start" font-weight="bold" font-style="italic" stroke="#00ffff" stroke-width="0.3" textLength="2.9" lengthAdjust="spacingAndGlyphs">9</text>
<line x1="471.5" y1="79.5" x2="480.3" y2="79.5" stroke="#00ffff" stroke-width="1"/>
<line x1="471.5" y1="79.5" x2="405.5" y2="144.8" stroke="#00ffff" stroke-width="0.78"/>
<text x="473.1" y="78.7" font-size="6.6" fill="#00ffff" text-anchor="start" font-weight="bold" font-style="italic" stroke="#00ffff" stroke-width="0.3" textLength="2.9" lengthAdjust="spacingAndGlyphs">8</text>
<line x1="485.9" y1="79.5" x2="499" y2="79.5" stroke="#00ffff" stroke-width="1"/>
<line x1="485.9" y1="79.5" x2="449.3" y2="123" stroke="#00ffff" stroke-width="0.84"/>
<text x="487.1" y="78.7" font-size="6.6" fill="#00ffff" text-anchor="start" font-weight="bold" font-style="italic" stroke="#00ffff" stroke-width="0.3" textLength="5.4" lengthAdjust="spacingAndGlyphs">31</text>
<line x1="552.6" y1="139.4" x2="558" y2="139.4" stroke="#00ffff" stroke-width="1"/>
<line x1="552.6" y1="139.4" x2="412.5" y2="149.5" stroke="#00ffff" stroke-width="1.1"/>
<text x="554.2" y="138.6" font-size="6.6" fill="#00ffff" text-anchor="start" font-weight="bold" font-style="italic" stroke="#00ffff" stroke-width="0.3" textLength="2.9" lengthAdjust="spacingAndGlyphs">7</text>
<line x1="552.6" y1="148.4" x2="558" y2="148.4" stroke="#00ffff" stroke-width="1"/>
<line x1="552.6" y1="148.4" x2="422" y2="156.3" stroke="#00ffff" stroke-width="1.1"/>
<text x="554.2" y="147.6" font-size="6.6" fill="#00ffff" text-anchor="start" font-weight="bold" font-style="italic" stroke="#00ffff" stroke-width="0.3" textLength="2.9" lengthAdjust="spacingAndGlyphs">6</text>
<line x1="552.6" y1="156.3" x2="558" y2="156.3" stroke="#00ffff" stroke-width="1"/>
<line x1="552.6" y1="156.3" x2="411" y2="164" stroke="#00ffff" stroke-width="1.1"/>
<text x="554.2" y="155.5" font-size="6.6" fill="#00ffff" text-anchor="start" font-weight="bold" font-style="italic" stroke="#00ffff" stroke-width="0.3" textLength="2.9" lengthAdjust="spacingAndGlyphs">5</text>
<line x1="552.6" y1="166.3" x2="558" y2="166.3" stroke="#00ffff" stroke-width="1"/>
<line x1="552.6" y1="166.3" x2="410.7" y2="185" stroke="#00ffff" stroke-width="1.09"/>
<text x="554.2" y="165.5" font-size="6.6" fill="#00ffff" text-anchor="start" font-weight="bold" font-style="italic" stroke="#00ffff" stroke-width="0.3" textLength="2.9" lengthAdjust="spacingAndGlyphs">4</text>
<line x1="552.6" y1="174.6" x2="558" y2="174.6" stroke="#00ffff" stroke-width="1"/>
<line x1="552.6" y1="174.6" x2="411" y2="197" stroke="#00ffff" stroke-width="1.09"/>
<text x="554.2" y="173.8" font-size="6.6" fill="#00ffff" text-anchor="start" font-weight="bold" font-style="italic" stroke="#00ffff" stroke-width="0.3" textLength="2.9" lengthAdjust="spacingAndGlyphs">3</text>
<line x1="552.6" y1="183.5" x2="558" y2="183.5" stroke="#00ffff" stroke-width="1"/>
<line x1="552.6" y1="183.5" x2="412" y2="209.8" stroke="#00ffff" stroke-width="1.08"/>
<text x="554.2" y="182.7" font-size="6.6" fill="#00ffff" text-anchor="start" font-weight="bold" font-style="italic" stroke="#00ffff" stroke-width="0.3" textLength="2.9" lengthAdjust="spacingAndGlyphs">2</text>
<line x1="552.6" y1="191.5" x2="558" y2="191.5" stroke="#00ffff" stroke-width="1"/>
<line x1="552.6" y1="191.5" x2="413.7" y2="226.2" stroke="#00ffff" stroke-width="1.07"/>
<text x="554.2" y="190.7" font-size="6.6" fill="#00ffff" text-anchor="start" font-weight="bold" font-style="italic" stroke="#00ffff" stroke-width="0.3" textLength="2.9" lengthAdjust="spacingAndGlyphs">1</text>
<line x1="101.2" y1="377.5" x2="147.3" y2="377.5" stroke="#00ffff" stroke-width="1"/>
<line x1="102.3" y1="377.5" x2="102.3" y2="632.3" stroke="#00ffff" stroke-width="1"/>
<line x1="101.2" y1="632.3" x2="147.3" y2="632.3" stroke="#00ffff" stroke-width="1"/>
<rect x="100.5" y="502" width="2" height="4.5" fill="#00ffff"/>
<path d="M147.3,472.4 V377.5 H223.25 M241.25,377.5 H393.25 M411.25,377.5 H487.5 V462 H467 L462,467.5 V541 L467,546.7 H487.5 V632.3 H411.25 M393.25,632.3 H241.25 M223.25,632.3 H147.3 V536.5" stroke="#00ff00" stroke-width="1" fill="none"/>
<path d="M190,377.5 A42.5,42.5 0 0 0 275,377.5 M360,377.5 A42.5,42.5 0 0 0 445,377.5 M190,632.3 A42.5,42.5 0 0 1 275,632.3 M360,632.3 A42.5,42.5 0 0 1 445,632.3" stroke="#00ff00" stroke-width="1" fill="none"/>
<path d="M223.25,377.5 V393.5 A9,9 0 0 0 241.25,393.5 V377.5" stroke="#00ff00" stroke-width="1" fill="none"/>
<path d="M393.25,377.5 V393.5 A9,9 0 0 0 411.25,393.5 V377.5" stroke="#00ff00" stroke-width="1" fill="none"/>
<path d="M223.25,632.3 V615.7 A9,9 0 0 1 241.25,615.7 V632.3" stroke="#00ff00" stroke-width="1" fill="none"/>
<path d="M393.25,632.3 V615.7 A9,9 0 0 1 411.25,615.7 V632.3" stroke="#00ff00" stroke-width="1" fill="none"/>
<circle cx="190.5" cy="428.3" r="14.8" stroke="#00ff00" stroke-width="1" fill="none"/>
<circle cx="190.5" cy="428.3" r="11.6" stroke="#00ff00" stroke-width="1" fill="none"/>
<line x1="172.5" y1="428.3" x2="210" y2="428.3" stroke="#ff0000" stroke-width="1"/>
<line x1="190.5" y1="411.8" x2="190.5" y2="444.8" stroke="#ff0000" stroke-width="1"/>
<circle cx="445" cy="428.3" r="14.8" stroke="#00ff00" stroke-width="1" fill="none"/>
<circle cx="445" cy="428.3" r="11.6" stroke="#00ff00" stroke-width="1" fill="none"/>
<line x1="427" y1="428.3" x2="464.5" y2="428.3" stroke="#ff0000" stroke-width="1"/>
<line x1="445" y1="411.8" x2="445" y2="444.8" stroke="#ff0000" stroke-width="1"/>
<circle cx="190.5" cy="581.2" r="14.8" stroke="#00ff00" stroke-width="1" fill="none"/>
<circle cx="190.5" cy="581.2" r="11.6" stroke="#00ff00" stroke-width="1" fill="none"/>
<line x1="172.5" y1="581.2" x2="210" y2="581.2" stroke="#ff0000" stroke-width="1"/>
<line x1="190.5" y1="564.7" x2="190.5" y2="597.7" stroke="#ff0000" stroke-width="1"/>
<circle cx="445" cy="581.2" r="14.8" stroke="#00ff00" stroke-width="1" fill="none"/>
<circle cx="445" cy="581.2" r="11.6" stroke="#00ff00" stroke-width="1" fill="none"/>
<line x1="427" y1="581.2" x2="464.5" y2="581.2" stroke="#ff0000" stroke-width="1"/>
<line x1="445" y1="564.7" x2="445" y2="597.7" stroke="#ff0000" stroke-width="1"/>
<circle cx="272" cy="417" r="8.8" stroke="#00ff00" stroke-width="1" fill="none"/>
<line x1="263" y1="417" x2="281" y2="417" stroke="#ff0000" stroke-width="1"/>
<line x1="272" y1="408" x2="272" y2="426" stroke="#ff0000" stroke-width="1"/>
<circle cx="362.5" cy="417" r="8.8" stroke="#00ff00" stroke-width="1" fill="none"/>
<line x1="353.5" y1="417" x2="371.5" y2="417" stroke="#ff0000" stroke-width="1"/>
<line x1="362.5" y1="408" x2="362.5" y2="426" stroke="#ff0000" stroke-width="1"/>
<circle cx="272" cy="591.5" r="8.8" stroke="#00ff00" stroke-width="1" fill="none"/>
<line x1="263" y1="591.5" x2="281" y2="591.5" stroke="#ff0000" stroke-width="1"/>
<line x1="272" y1="582.5" x2="272" y2="600.5" stroke="#ff0000" stroke-width="1"/>
<circle cx="362.5" cy="591.5" r="8.8" stroke="#00ff00" stroke-width="1" fill="none"/>
<line x1="353.5" y1="591.5" x2="371.5" y2="591.5" stroke="#ff0000" stroke-width="1"/>
<line x1="362.5" y1="582.5" x2="362.5" y2="600.5" stroke="#ff0000" stroke-width="1"/>
<path d="M147,486.5 H111.3 V522.3 H147" stroke="#00ff00" stroke-width="1" fill="none"/>
<line x1="147" y1="486.5" x2="293" y2="486.5" stroke="#00ff00" stroke-width="1" stroke-dasharray="16 2 1.5 2 1.5 2"/>
<line x1="147" y1="522.3" x2="293" y2="522.3" stroke="#00ff00" stroke-width="1" stroke-dasharray="16 2 1.5 2 1.5 2"/>
<line x1="293" y1="487.5" x2="415.6" y2="487.5" stroke="#00ff00" stroke-width="1" stroke-dasharray="16 2 1.5 2 1.5 2"/>
<line x1="293" y1="521.5" x2="415.6" y2="521.5" stroke="#00ff00" stroke-width="1" stroke-dasharray="16 2 1.5 2 1.5 2"/>
<line x1="415.6" y1="487.5" x2="462" y2="487.5" stroke="#00ff00" stroke-width="1"/>
<line x1="415.6" y1="521.5" x2="462" y2="521.5" stroke="#00ff00" stroke-width="1"/>
<line x1="111.3" y1="504.5" x2="515.5" y2="504.5" stroke="#ff0000" stroke-width="1" stroke-dasharray="22 2.5 2 2.5"/>
<path d="M218.3,472.4 H134.3 V486.5" stroke="#00ff00" stroke-width="1" fill="none"/>
<path d="M134.3,480 Q138,484 147,485.3" stroke="#00ff00" stroke-width="1" fill="none"/>
<path d="M149.4,472.4 V488.6 L150.4,489.6 H215.9 L216.9,488.6 V472.4" stroke="#00ff00" stroke-width="1" fill="none"/>
<line x1="218.3" y1="472.4" x2="218.3" y2="486.5" stroke="#00ff00" stroke-width="1"/>
<circle cx="156.3" cy="484.4" r="2.6" stroke="#00ff00" stroke-width="1" fill="none"/>
<line x1="156.3" y1="479.5" x2="156.3" y2="489.5" stroke="#ff0000" stroke-width="1"/>
<circle cx="173.4" cy="484.4" r="2.6" stroke="#00ff00" stroke-width="1" fill="none"/>
<line x1="173.4" y1="479.5" x2="173.4" y2="489.5" stroke="#ff0000" stroke-width="1"/>
<circle cx="205.6" cy="484.4" r="3" stroke="#00ff00" stroke-width="1" fill="none"/>
<line x1="205.6" y1="479.5" x2="205.6" y2="489.5" stroke="#ffffff" stroke-width="1"/>
<line x1="150.8" y1="484.4" x2="210.7" y2="484.4" stroke="#ff0000" stroke-width="1"/>
<circle cx="198.6" cy="479.2" r="4" stroke="#00ff00" stroke-width="1" fill="none"/>
<line x1="193.1" y1="479.2" x2="204.1" y2="479.2" stroke="#ff0000" stroke-width="1"/>
<line x1="198.6" y1="473.7" x2="198.6" y2="484.7" stroke="#ff0000" stroke-width="1"/>
<line x1="190" y1="479.2" x2="206.8" y2="479.2" stroke="#ff0000" stroke-width="1"/>
<path d="M218.3,536.6 H134.3 V522.5" stroke="#00ff00" stroke-width="1" fill="none"/>
<path d="M134.3,529 Q138,525 147,523.7" stroke="#00ff00" stroke-width="1" fill="none"/>
<path d="M149.4,536.6 V520.4 L150.4,519.4 H215.9 L216.9,520.4 V536.6" stroke="#00ff00" stroke-width="1" fill="none"/>
<line x1="218.3" y1="536.6" x2="218.3" y2="522.5" stroke="#00ff00" stroke-width="1"/>
<circle cx="156.3" cy="524.6" r="2.6" stroke="#00ff00" stroke-width="1" fill="none"/>
<line x1="156.3" y1="529.5" x2="156.3" y2="519.5" stroke="#ff0000" stroke-width="1"/>
<circle cx="173.4" cy="524.6" r="2.6" stroke="#00ff00" stroke-width="1" fill="none"/>
<line x1="173.4" y1="529.5" x2="173.4" y2="519.5" stroke="#ff0000" stroke-width="1"/>
<circle cx="205.6" cy="524.6" r="3" stroke="#00ff00" stroke-width="1" fill="none"/>
<line x1="205.6" y1="529.5" x2="205.6" y2="519.5" stroke="#ffffff" stroke-width="1"/>
<line x1="150.8" y1="524.6" x2="210.7" y2="524.6" stroke="#ff0000" stroke-width="1"/>
<circle cx="198.6" cy="529.8" r="4" stroke="#00ff00" stroke-width="1" fill="none"/>
<line x1="193.1" y1="529.8" x2="204.1" y2="529.8" stroke="#ff0000" stroke-width="1"/>
<line x1="198.6" y1="524.3" x2="198.6" y2="535.3" stroke="#ff0000" stroke-width="1"/>
<line x1="190" y1="529.8" x2="206.8" y2="529.8" stroke="#ff0000" stroke-width="1"/>
<rect x="219.4" y="451.3" width="196.2" height="106.2" stroke="#00ff00" stroke-width="1" fill="none"/>
<circle cx="232.5" cy="459.7" r="4.3" stroke="#ffffff" stroke-width="1.3" fill="none"/>
<circle cx="232.5" cy="459.7" r="3.6" stroke="#00ff00" stroke-width="1" fill="none"/>
<line x1="223.5" y1="459.7" x2="241.5" y2="459.7" stroke="#ff0000" stroke-width="1"/>
<circle cx="232.5" cy="470.6" r="3.6" stroke="#00ff00" stroke-width="1" fill="none"/>
<line x1="223.5" y1="470.6" x2="241.5" y2="470.6" stroke="#ff0000" stroke-width="1"/>
<circle cx="402.5" cy="459.7" r="4.3" stroke="#ffffff" stroke-width="1.3" fill="none"/>
<circle cx="402.5" cy="459.7" r="3.6" stroke="#00ff00" stroke-width="1" fill="none"/>
<line x1="393.5" y1="459.7" x2="411.5" y2="459.7" stroke="#ff0000" stroke-width="1"/>
<circle cx="402.5" cy="470.6" r="3.6" stroke="#00ff00" stroke-width="1" fill="none"/>
<line x1="393.5" y1="470.6" x2="411.5" y2="470.6" stroke="#ff0000" stroke-width="1"/>
<line x1="232.5" y1="451" x2="232.5" y2="491" stroke="#ff0000" stroke-width="1"/>
<line x1="402.5" y1="451" x2="402.5" y2="476" stroke="#ff0000" stroke-width="1"/>
<circle cx="281.8" cy="462" r="8" stroke="#00ff00" stroke-width="1" fill="none"/>
<line x1="273.3" y1="462" x2="290.3" y2="462" stroke="#ff0000" stroke-width="1"/>
<line x1="281.8" y1="453.5" x2="281.8" y2="470.5" stroke="#ff0000" stroke-width="1"/>
<circle cx="353.5" cy="462" r="8" stroke="#00ff00" stroke-width="1" fill="none"/>
<line x1="345" y1="462" x2="362" y2="462" stroke="#ff0000" stroke-width="1"/>
<line x1="353.5" y1="453.5" x2="353.5" y2="470.5" stroke="#ff0000" stroke-width="1"/>
<circle cx="232.5" cy="482.5" r="4.9" stroke="#00ff00" stroke-width="1.6" fill="none"/>
<line x1="223.5" y1="482.5" x2="241.5" y2="482.5" stroke="#ff0000" stroke-width="1"/>
<line x1="232.5" y1="473.5" x2="232.5" y2="491.5" stroke="#ff0000" stroke-width="1"/>
<circle cx="262.5" cy="482.5" r="4.9" stroke="#00ff00" stroke-width="1.6" fill="none"/>
<line x1="253.5" y1="482.5" x2="271.5" y2="482.5" stroke="#ff0000" stroke-width="1"/>
<line x1="262.5" y1="473.5" x2="262.5" y2="491.5" stroke="#ff0000" stroke-width="1"/>
<circle cx="303.3" cy="483.4" r="4.9" stroke="#00ff00" stroke-width="1.6" fill="none"/>
<line x1="294.3" y1="483.4" x2="312.3" y2="483.4" stroke="#ff0000" stroke-width="1"/>
<line x1="303.3" y1="474.4" x2="303.3" y2="492.4" stroke="#ff0000" stroke-width="1"/>
<circle cx="345.7" cy="483.4" r="4.9" stroke="#00ff00" stroke-width="1.6" fill="none"/>
<line x1="336.7" y1="483.4" x2="354.7" y2="483.4" stroke="#ff0000" stroke-width="1"/>
<line x1="345.7" y1="474.4" x2="345.7" y2="492.4" stroke="#ff0000" stroke-width="1"/>
<circle cx="382.4" cy="484.4" r="4.9" stroke="#00ff00" stroke-width="1.6" fill="none"/>
<line x1="373.4" y1="484.4" x2="391.4" y2="484.4" stroke="#ff0000" stroke-width="1"/>
<line x1="382.4" y1="475.4" x2="382.4" y2="493.4" stroke="#ff0000" stroke-width="1"/>
<rect x="272.2" y="484.1" width="20.9" height="3.4" stroke="#00ff00" stroke-width="1" fill="none"/>
<rect x="293.1" y="480" width="3.8" height="7.5" stroke="#00ff00" stroke-width="1" fill="none"/>
<circle cx="232.5" cy="549.3" r="4.3" stroke="#ffffff" stroke-width="1.3" fill="none"/>
<circle cx="232.5" cy="549.3" r="3.6" stroke="#00ff00" stroke-width="1" fill="none"/>
<line x1="223.5" y1="549.3" x2="241.5" y2="549.3" stroke="#ff0000" stroke-width="1"/>
<circle cx="232.5" cy="538.4" r="3.6" stroke="#00ff00" stroke-width="1" fill="none"/>
<line x1="223.5" y1="538.4" x2="241.5" y2="538.4" stroke="#ff0000" stroke-width="1"/>
<circle cx="402.5" cy="549.3" r="4.3" stroke="#ffffff" stroke-width="1.3" fill="none"/>
<circle cx="402.5" cy="549.3" r="3.6" stroke="#00ff00" stroke-width="1" fill="none"/>
<line x1="393.5" y1="549.3" x2="411.5" y2="549.3" stroke="#ff0000" stroke-width="1"/>
<circle cx="402.5" cy="538.4" r="3.6" stroke="#00ff00" stroke-width="1" fill="none"/>
<line x1="393.5" y1="538.4" x2="411.5" y2="538.4" stroke="#ff0000" stroke-width="1"/>
<line x1="232.5" y1="558" x2="232.5" y2="518" stroke="#ff0000" stroke-width="1"/>
<line x1="402.5" y1="558" x2="402.5" y2="533" stroke="#ff0000" stroke-width="1"/>
<circle cx="281.8" cy="547" r="8" stroke="#00ff00" stroke-width="1" fill="none"/>
<line x1="273.3" y1="547" x2="290.3" y2="547" stroke="#ff0000" stroke-width="1"/>
<line x1="281.8" y1="538.5" x2="281.8" y2="555.5" stroke="#ff0000" stroke-width="1"/>
<circle cx="353.5" cy="547" r="8" stroke="#00ff00" stroke-width="1" fill="none"/>
<line x1="345" y1="547" x2="362" y2="547" stroke="#ff0000" stroke-width="1"/>
<line x1="353.5" y1="538.5" x2="353.5" y2="555.5" stroke="#ff0000" stroke-width="1"/>
<circle cx="232.5" cy="526.5" r="4.9" stroke="#00ff00" stroke-width="1.6" fill="none"/>
<line x1="223.5" y1="526.5" x2="241.5" y2="526.5" stroke="#ff0000" stroke-width="1"/>
<line x1="232.5" y1="517.5" x2="232.5" y2="535.5" stroke="#ff0000" stroke-width="1"/>
<circle cx="262.5" cy="526.5" r="4.9" stroke="#00ff00" stroke-width="1.6" fill="none"/>
<line x1="253.5" y1="526.5" x2="271.5" y2="526.5" stroke="#ff0000" stroke-width="1"/>
<line x1="262.5" y1="517.5" x2="262.5" y2="535.5" stroke="#ff0000" stroke-width="1"/>
<circle cx="303.3" cy="525.6" r="4.9" stroke="#00ff00" stroke-width="1.6" fill="none"/>
<line x1="294.3" y1="525.6" x2="312.3" y2="525.6" stroke="#ff0000" stroke-width="1"/>
<line x1="303.3" y1="516.6" x2="303.3" y2="534.6" stroke="#ff0000" stroke-width="1"/>
<circle cx="345.7" cy="525.6" r="4.9" stroke="#00ff00" stroke-width="1.6" fill="none"/>
<line x1="336.7" y1="525.6" x2="354.7" y2="525.6" stroke="#ff0000" stroke-width="1"/>
<line x1="345.7" y1="516.6" x2="345.7" y2="534.6" stroke="#ff0000" stroke-width="1"/>
<circle cx="382.4" cy="524.6" r="4.9" stroke="#00ff00" stroke-width="1.6" fill="none"/>
<line x1="373.4" y1="524.6" x2="391.4" y2="524.6" stroke="#ff0000" stroke-width="1"/>
<line x1="382.4" y1="515.6" x2="382.4" y2="533.6" stroke="#ff0000" stroke-width="1"/>
<rect x="272.2" y="521.5" width="20.9" height="3.4" stroke="#00ff00" stroke-width="1" fill="none"/>
<rect x="293.1" y="521.5" width="3.8" height="7.5" stroke="#00ff00" stroke-width="1" fill="none"/>
<line x1="258.4" y1="486.5" x2="271.7" y2="486.5" stroke="#ff00ff" stroke-width="1"/>
<path d="M405.3,482.5 Q405.3,479.3 408,479.3 Q410.7,479.3 410.7,482.5 V526.5 Q410.7,529.7 408,529.7 Q405.3,529.7 405.3,526.5 Z" stroke="#00ff00" stroke-width="1" fill="none"/>
<rect x="415.6" y="477.2" width="8.2" height="54.4" stroke="#00ff00" stroke-width="1" fill="none"/>
<line x1="317.3" y1="420" x2="317.3" y2="591" stroke="#ff0000" stroke-width="1" stroke-dasharray="36 2.5 2 2.5"/>
<line x1="282.5" y1="478.5" x2="282.5" y2="527.5" stroke="#ff0000" stroke-width="1"/>
<line x1="303.3" y1="475" x2="303.3" y2="534" stroke="#ff0000" stroke-width="2"/>
<line x1="322.6" y1="478.5" x2="322.6" y2="527.5" stroke="#ff0000" stroke-width="1"/>
<line x1="271.2" y1="510.5" x2="356" y2="510.5" stroke="#ff0000" stroke-width="1"/>
<circle cx="282.5" cy="510.5" r="5.3" stroke="#00ff00" stroke-width="1" fill="none"/>
<circle cx="282.5" cy="510.5" r="3.3" stroke="#00ff00" stroke-width="1" fill="none"/>
<circle cx="303" cy="510.5" r="6" stroke="#00ff00" stroke-width="1" fill="none"/>
<circle cx="303" cy="510.5" r="4.4" stroke="#00ff00" stroke-width="1" fill="none"/>
<circle cx="303" cy="510.5" r="2.5" stroke="#00ff00" stroke-width="1" fill="none"/>
<polygon points="302,508.7 304.6,510.5 302,512.3" stroke="#ff0000" stroke-width="1" fill="#ff0000"/>
<circle cx="323.3" cy="510.5" r="6" stroke="#00ff00" stroke-width="1" fill="none"/>
<circle cx="323.3" cy="510.5" r="4" stroke="#00ff00" stroke-width="1" fill="none"/>
<circle cx="323.3" cy="510.5" r="2" stroke="#00ff00" stroke-width="1" fill="none"/>
<line x1="321" y1="510.5" x2="326" y2="510.5" stroke="#ff0000" stroke-width="1"/>
<path d="M296.5,491.5 Q298,490.3 299.6,491.5 V493.6 H305.9 V491.5 Q307.5,490.3 309.2,491.5 V499.3 Q307.5,500.3 305.9,499.3 V497.4 H299.6 V499.3 Q298,500.3 296.5,499.3 Z" stroke="#00ff00" stroke-width="1.2" fill="#00ffff"/>
<rect x="299.8" y="493.9" width="5.9" height="3.2" fill="#000"/>
<line x1="293.7" y1="495.5" x2="311.2" y2="495.5" stroke="#ff0000" stroke-width="1"/>
<line x1="293" y1="502.4" x2="311" y2="502.4" stroke="#ff0000" stroke-width="1"/>
<circle cx="297.3" cy="502.7" r="1.3" stroke="#00ff00" stroke-width="1" fill="#00ff00"/>
<circle cx="308.5" cy="502.7" r="1.3" stroke="#00ff00" stroke-width="1" fill="#00ffff"/>
<path d="M316.3,491.8 L318.8,491.5 L320,494 H326 L327.3,491.5 L329.7,491.8 L329.9,498.5 L328.3,500.3 M316.3,491.8 L316.1,498.5 L317.6,500.3 M319.5,497.6 H326.5 L328,500.5 M319.5,497.6 L318,500.5" stroke="#00ff00" stroke-width="1.3" fill="none"/>
<circle cx="317.3" cy="503" r="2.5" stroke="#00ff00" stroke-width="1.6" fill="none"/>
<circle cx="328.3" cy="503" r="2.5" stroke="#00ff00" stroke-width="1.6" fill="none"/>
<line x1="314.5" y1="503" x2="331.5" y2="503" stroke="#00ff00" stroke-width="1"/>
<rect x="316.6" y="502.4" width="1.4" height="1.2" fill="#ff0000"/>
<rect x="327.6" y="502.4" width="1.4" height="1.2" fill="#ff0000"/>
<path d="M333.4,490.4 Q333.4,488.4 335.4,488.4 H350.8 Q352.8,488.4 352.8,490.4 V513 Q351.5,518.5 344.3,521 Q334.8,518.5 333.4,513 Z" stroke="#00ff00" stroke-width="1.2" fill="#00ffff"/>
<path d="M337,490.5 L339.5,493.3 H346.6 L349,490.5 M337,499.5 L339.5,497 H346.6 L349,499.5" stroke="#00ff00" stroke-width="1.4" fill="none"/>
<line x1="335" y1="495.5" x2="352" y2="495.5" stroke="#ff0000" stroke-width="1"/>
<line x1="335" y1="510.5" x2="353" y2="510.5" stroke="#ff0000" stroke-width="1"/>
<line x1="343.7" y1="489" x2="343.7" y2="522" stroke="#ff0000" stroke-width="1"/>
<polygon points="336.4,492.5 337.5,491.4 338.6,492.5 337.5,493.6" stroke="#000" stroke-width="0.5" fill="#000"/>
<polygon points="347.9,492.5 349,491.4 350.1,492.5 349,493.6" stroke="#000" stroke-width="0.5" fill="#000"/>
<polygon points="335.9,500 337,498.9 338.1,500 337,501.1" stroke="#000" stroke-width="0.5" fill="#000"/>
<polygon points="348.4,500 349.5,498.9 350.6,500 349.5,501.1" stroke="#000" stroke-width="0.5" fill="#000"/>
<polygon points="336.4,508 337.5,506.9 338.6,508 337.5,509.1" stroke="#000" stroke-width="0.5" fill="#000"/>
<polygon points="337.9,515 339,513.9 340.1,515 339,516.1" stroke="#000" stroke-width="0.5" fill="#000"/>
<polygon points="346.9,516 348,514.9 349.1,516 348,517.1" stroke="#000" stroke-width="0.5" fill="#000"/>
<polygon points="348.9,507 350,505.9 351.1,507 350,508.1" stroke="#000" stroke-width="0.5" fill="#000"/>
<circle cx="343.6" cy="510.5" r="5" stroke="#00ff00" stroke-width="1" fill="none"/>
<circle cx="343.6" cy="510.5" r="3.3" stroke="#00ff00" stroke-width="1" fill="none"/>
<circle cx="337.8" cy="503" r="1.8" stroke="#00ff00" stroke-width="1.3" fill="none"/>
<circle cx="349.3" cy="503" r="1.8" stroke="#00ff00" stroke-width="1.3" fill="none"/>
<rect x="337.2" y="502.5" width="1.2" height="1" fill="#ff0000"/>
<rect x="348.7" y="502.5" width="1.2" height="1" fill="#ff0000"/>
<line x1="186.3" y1="356.6" x2="194.7" y2="356.6" stroke="#00ffff" stroke-width="1"/>
<line x1="186.3" y1="356.6" x2="143.8" y2="475" stroke="#00ffff" stroke-width="1.04"/>
<text x="190.5" y="355.8" font-size="7" fill="#00ffff" text-anchor="middle" font-weight="bold" font-style="italic" stroke="#00ffff" stroke-width="0.3" textLength="6" lengthAdjust="spacingAndGlyphs">20</text>
<line x1="235.5" y1="356.6" x2="243.8" y2="356.6" stroke="#00ffff" stroke-width="1"/>
<line x1="235.5" y1="356.6" x2="167.5" y2="473.8" stroke="#00ffff" stroke-width="0.95"/>
<text x="239.65" y="355.8" font-size="7" fill="#00ffff" text-anchor="middle" font-weight="bold" font-style="italic" stroke="#00ffff" stroke-width="0.3" textLength="6" lengthAdjust="spacingAndGlyphs">21</text>
<line x1="317.4" y1="356.6" x2="325.6" y2="356.6" stroke="#00ffff" stroke-width="1"/>
<line x1="317.4" y1="356.6" x2="261.8" y2="484" stroke="#00ffff" stroke-width="1.01"/>
<text x="321.5" y="355.8" font-size="7" fill="#00ffff" text-anchor="middle" font-weight="bold" font-style="italic" stroke="#00ffff" stroke-width="0.3" textLength="6" lengthAdjust="spacingAndGlyphs">22</text>
<line x1="338.3" y1="356.6" x2="347.9" y2="356.6" stroke="#00ffff" stroke-width="1"/>
<line x1="338.3" y1="356.6" x2="285.5" y2="484.8" stroke="#00ffff" stroke-width="1.02"/>
<text x="343.1" y="355.8" font-size="7" fill="#00ffff" text-anchor="middle" font-weight="bold" font-style="italic" stroke="#00ffff" stroke-width="0.3" textLength="6" lengthAdjust="spacingAndGlyphs">23</text>
<line x1="359.5" y1="356.6" x2="367" y2="356.6" stroke="#00ffff" stroke-width="1"/>
<line x1="359.5" y1="356.6" x2="296.5" y2="481.3" stroke="#00ffff" stroke-width="0.98"/>
<text x="363.25" y="355.8" font-size="7" fill="#00ffff" text-anchor="middle" font-weight="bold" font-style="italic" stroke="#00ffff" stroke-width="0.3" textLength="6" lengthAdjust="spacingAndGlyphs">24</text>
<line x1="369.4" y1="356.6" x2="377.7" y2="356.6" stroke="#00ffff" stroke-width="1"/>
<line x1="369.4" y1="356.6" x2="306.5" y2="500.6" stroke="#00ffff" stroke-width="1.01"/>
<text x="373.55" y="355.8" font-size="7" fill="#00ffff" text-anchor="middle" font-weight="bold" font-style="italic" stroke="#00ffff" stroke-width="0.3" textLength="6" lengthAdjust="spacingAndGlyphs">25</text>
<line x1="380.2" y1="356.6" x2="386.8" y2="356.6" stroke="#00ffff" stroke-width="1"/>
<line x1="380.2" y1="356.6" x2="309.8" y2="502.7" stroke="#00ffff" stroke-width="0.99"/>
<text x="383.5" y="355.8" font-size="7" fill="#00ffff" text-anchor="middle" font-weight="bold" font-style="italic" stroke="#00ffff" stroke-width="0.3" textLength="6" lengthAdjust="spacingAndGlyphs">26</text>
<line x1="390.9" y1="356.6" x2="401.7" y2="356.6" stroke="#00ffff" stroke-width="1"/>
<line x1="390.9" y1="356.6" x2="328" y2="493" stroke="#00ffff" stroke-width="1"/>
<text x="396.3" y="355.8" font-size="7" fill="#00ffff" text-anchor="middle" font-weight="bold" font-style="italic" stroke="#00ffff" stroke-width="0.3" textLength="6" lengthAdjust="spacingAndGlyphs">27</text>
<line x1="413.2" y1="356.6" x2="424" y2="356.6" stroke="#00ffff" stroke-width="1"/>
<line x1="413.2" y1="356.6" x2="353.4" y2="462.1" stroke="#00ffff" stroke-width="0.96"/>
<text x="418.6" y="355.8" font-size="7" fill="#00ffff" text-anchor="middle" font-weight="bold" font-style="italic" stroke="#00ffff" stroke-width="0.3" textLength="6" lengthAdjust="spacingAndGlyphs">28</text>
<line x1="433" y1="356.6" x2="443.8" y2="356.6" stroke="#00ffff" stroke-width="1"/>
<line x1="433" y1="356.6" x2="355.5" y2="462.3" stroke="#00ffff" stroke-width="0.89"/>
<text x="438.4" y="355.8" font-size="7" fill="#00ffff" text-anchor="middle" font-weight="bold" font-style="italic" stroke="#00ffff" stroke-width="0.3" textLength="6" lengthAdjust="spacingAndGlyphs">29</text>
<line x1="547.5" y1="390" x2="556.3" y2="390" stroke="#00ffff" stroke-width="1"/>
<line x1="547.5" y1="390" x2="408.7" y2="482" stroke="#00ffff" stroke-width="0.92"/>
<text x="551.9" y="389.2" font-size="7" fill="#00ffff" text-anchor="middle" font-weight="bold" font-style="italic" stroke="#00ffff" stroke-width="0.3" textLength="6" lengthAdjust="spacingAndGlyphs">30</text>
<line x1="719.6" y1="104.6" x2="719.6" y2="154.8" stroke="#ff0000" stroke-width="1" stroke-dasharray="3 1.5 2 1.5 40 1.5 2 1.5"/>
<line x1="712.3" y1="123.4" x2="728.7" y2="123.4" stroke="#ff0000" stroke-width="1"/>
<line x1="707" y1="137.4" x2="726" y2="137.4" stroke="#ff0000" stroke-width="1"/>
<line x1="710.2" y1="107.5" x2="728.7" y2="107.5" stroke="#00ffff" stroke-width="1"/>
<line x1="710.2" y1="107.5" x2="710.2" y2="124" stroke="#00ffff" stroke-width="1"/>
<line x1="728.7" y1="107.5" x2="728.7" y2="124" stroke="#00ffff" stroke-width="1"/>
<line x1="712.8" y1="113.8" x2="726.3" y2="113.8" stroke="#00ffff" stroke-width="1"/>
<line x1="712.8" y1="113.8" x2="712.8" y2="118" stroke="#00ffff" stroke-width="1"/>
<line x1="726.3" y1="113.8" x2="726.3" y2="118" stroke="#00ffff" stroke-width="1"/>
<text x="719.6" y="107" font-size="3.6" fill="#00ffff" text-anchor="middle" font-weight="bold" font-style="italic" stroke="#00ffff" stroke-width="0.35">20</text>
<text x="719.6" y="113.4" font-size="3.4" fill="#00ffff" text-anchor="middle" font-weight="bold" font-style="italic" stroke="#00ffff" stroke-width="0.35">12</text>
<path d="M710.2,118 Q710.2,115.7 712.5,115.7 H726.4 Q728.7,115.7 728.7,118 V141.3 L724,146.6 H715 L710.2,141.3 Z" stroke="#00ff00" stroke-width="1.2" fill="none"/>
<line x1="714" y1="117.4" x2="724.5" y2="117.4" stroke="#00ff00" stroke-width="1.6"/>
<line x1="715.5" y1="120.8" x2="723.5" y2="120.8" stroke="#00ff00" stroke-width="1.8"/>
<line x1="714.5" y1="124.8" x2="724.5" y2="124.8" stroke="#00ff00" stroke-width="1.2"/>
<path d="M713,116.5 L715.5,119 M726,116.5 L723.5,119 M714,128 L716,124.8 M725,128 L723,124.8" stroke="#00ff00" stroke-width="1.2" fill="none"/>
<circle cx="713.5" cy="130.5" r="1.8" stroke="#00ff00" stroke-width="1.8" fill="none"/>
<circle cx="725" cy="130.5" r="1.8" stroke="#00ff00" stroke-width="1.8" fill="none"/>
<rect x="712.9" y="130" width="1.2" height="1" fill="#ff0000"/>
<rect x="724.4" y="130" width="1.2" height="1" fill="#ff0000"/>
<line x1="710.5" y1="130.5" x2="715" y2="130.5" stroke="#ff0000" stroke-width="1"/>
<line x1="723.5" y1="130.5" x2="728" y2="130.5" stroke="#ff0000" stroke-width="1"/>
<circle cx="718.6" cy="137.4" r="4.6" stroke="#00ff00" stroke-width="1" fill="none"/>
<circle cx="718.6" cy="137.4" r="3" stroke="#00ff00" stroke-width="1" fill="none"/>
<circle cx="718.6" cy="137.4" r="1.4" stroke="#00ff00" stroke-width="1.4" fill="none"/>
<line x1="728.7" y1="116.2" x2="736" y2="116.2" stroke="#00ffff" stroke-width="1"/>
<line x1="726" y1="137.4" x2="736" y2="137.4" stroke="#00ffff" stroke-width="1"/>
<line x1="735" y1="116.2" x2="735" y2="137.4" stroke="#00ffff" stroke-width="1"/>
<text x="730.5" y="113.6" font-size="4.2" fill="#00ffff" text-anchor="start" font-weight="bold" font-style="italic" stroke="#00ffff" stroke-width="0.35">R2</text>
<text x="731.2" y="129.6" font-size="3.6" fill="#00ffff" text-anchor="start" font-weight="bold" font-style="italic" stroke="#00ffff" stroke-width="0.35">21</text>
<line x1="708.3" y1="116.5" x2="708.3" y2="130.5" stroke="#00ffff" stroke-width="1"/>
<line x1="707.3" y1="120" x2="714" y2="120" stroke="#00ffff" stroke-width="1"/>
<line x1="704" y1="123.4" x2="712.3" y2="123.4" stroke="#00ffff" stroke-width="1"/>
<line x1="707.3" y1="126.5" x2="714" y2="126.5" stroke="#00ffff" stroke-width="1"/>
<text x="704.2" y="124.6" font-size="3.6" fill="#00ffff" text-anchor="start" font-weight="bold" font-style="italic" stroke="#00ffff" stroke-width="0.35">5</text>
<line x1="715.7" y1="132.6" x2="726.8" y2="147" stroke="#00ffff" stroke-width="1.48"/>
<text x="724" y="148" font-size="4.6" fill="#00ffff" text-anchor="start" font-weight="bold" font-style="italic" stroke="#00ffff" stroke-width="0.35" textLength="11" lengthAdjust="spacingAndGlyphs">Ø6.2</text>
<text x="725" y="152.3" font-size="4.2" fill="#00ffff" text-anchor="start" font-weight="bold" font-style="italic" stroke="#00ffff" stroke-width="0.35" textLength="10" lengthAdjust="spacingAndGlyphs">H7/m6</text>
<line x1="743.2" y1="112.3" x2="743.2" y2="151.4" stroke="#00ffff" stroke-width="1"/>
<line x1="746.6" y1="112.3" x2="746.6" y2="151.4" stroke="#00ffff" stroke-width="1"/>
<line x1="739" y1="113.1" x2="765" y2="113.1" stroke="#00ffff" stroke-width="1"/>
<text x="761" y="112.6" font-size="3.8" fill="#00ffff" text-anchor="start" font-weight="bold" font-style="italic" stroke="#00ffff" stroke-width="0.35">11</text>
<line x1="745" y1="116.7" x2="745" y2="146" stroke="#00ff00" stroke-width="1.8"/>
<line x1="742" y1="123.4" x2="748" y2="123.4" stroke="#ff0000" stroke-width="1"/>
<line x1="742" y1="137.4" x2="748" y2="137.4" stroke="#ff0000" stroke-width="1"/>
<line x1="756.7" y1="131" x2="756.7" y2="140.3" stroke="#00ffff" stroke-width="1"/>
<line x1="746.6" y1="135" x2="758" y2="135" stroke="#00ffff" stroke-width="1"/>
<line x1="746.6" y1="138.6" x2="758" y2="138.6" stroke="#00ffff" stroke-width="1"/>
<line x1="739" y1="150.4" x2="754" y2="150.4" stroke="#00ffff" stroke-width="1"/>
<text x="751" y="149.8" font-size="3.8" fill="#00ffff" text-anchor="start" font-weight="bold" font-style="italic" stroke="#00ffff" stroke-width="0.35" textLength="6" lengthAdjust="spacingAndGlyphs">0.5</text>
<path d="M751,149 H753 V146.5 H755 V144 H757" stroke="#00ffff" stroke-width="1" fill="none"/>
<text x="728" y="158.5" font-size="3.8" fill="#00ffff" text-anchor="start" font-weight="bold" font-style="italic" stroke="#00ffff" stroke-width="0.35" textLength="5" lengthAdjust="spacingAndGlyphs">R0.3</text>
<text x="736" y="156.5" font-size="3.4" fill="#00ffff" text-anchor="start" font-weight="bold" font-style="italic" stroke="#00ffff" stroke-width="0.35" textLength="5" lengthAdjust="spacingAndGlyphs">0.4</text>
<line x1="732.6" y1="158.1" x2="744.6" y2="158.1" stroke="#00ffff" stroke-width="1"/>
<line x1="733" y1="161" x2="743" y2="161" stroke="#00ff00" stroke-width="1.8"/>
<line x1="743" y1="161.5" x2="749" y2="161.5" stroke="#00ffff" stroke-width="1"/>
<line x1="747.8" y1="154.8" x2="747.8" y2="167" stroke="#00ffff" stroke-width="1"/>
<line x1="738.6" y1="157" x2="738.6" y2="166" stroke="#ff0000" stroke-width="1"/>
<line x1="744" y1="165" x2="748" y2="165" stroke="#00ffff" stroke-width="1"/>
<rect x="721.2" y="173.2" width="17.8" height="5" fill="#00ffff"/>
<text x="730.1" y="177.65" font-size="5" fill="#00e4e4" text-anchor="middle" font-weight="bold" font-style="normal" textLength="17.2" lengthAdjust="spacingAndGlyphs">导正销零件</text>
<text x="721.3" y="188.7" font-size="4.6" fill="#00ffff" text-anchor="start" font-weight="bold" font-style="normal" stroke="#00ffff" stroke-width="0.35" textLength="16.5" lengthAdjust="spacingAndGlyphs">材料 Cr12</text>
<text x="721.3" y="195.8" font-size="4.6" fill="#00ffff" text-anchor="start" font-weight="bold" font-style="normal" stroke="#00ffff" stroke-width="0.35" textLength="12.5" lengthAdjust="spacingAndGlyphs">热处理</text>
<text x="721.3" y="202.8" font-size="4.4" fill="#00ffff" text-anchor="start" font-weight="bold" font-style="italic" stroke="#00ffff" stroke-width="0.35" textLength="10.5" lengthAdjust="spacingAndGlyphs">58-62</text>
<line x1="683.1" y1="289.3" x2="764.8" y2="289.3" stroke="#00ffff" stroke-width="1"/>
<line x1="683.1" y1="287.8" x2="683.1" y2="298.5" stroke="#00ffff" stroke-width="1"/>
<line x1="704.2" y1="287.8" x2="704.2" y2="298.5" stroke="#00ffff" stroke-width="1"/>
<line x1="724" y1="287.8" x2="724" y2="298.5" stroke="#00ffff" stroke-width="1"/>
<line x1="744.4" y1="287.8" x2="744.4" y2="298.5" stroke="#00ffff" stroke-width="1"/>
<line x1="764.8" y1="287.8" x2="764.8" y2="298.5" stroke="#00ffff" stroke-width="1"/>
<rect x="688" y="280.6" width="9" height="4.2" fill="#00ffff"/>
<text x="692.5" y="284.25" font-size="4.2" fill="#00e4e4" text-anchor="middle" font-weight="bold" font-style="normal" textLength="8.4" lengthAdjust="spacingAndGlyphs">落料</text>
<rect x="709" y="280.6" width="8" height="4.2" fill="#00ffff"/>
<text x="713" y="284.25" font-size="4.2" fill="#00e4e4" text-anchor="middle" font-weight="bold" font-style="normal" textLength="7.4" lengthAdjust="spacingAndGlyphs">冲孔</text>
<rect x="728.9" y="280.6" width="8.9" height="4.2" fill="#00ffff"/>
<text x="733.35" y="284.25" font-size="4.2" fill="#00e4e4" text-anchor="middle" font-weight="bold" font-style="normal" textLength="8.3" lengthAdjust="spacingAndGlyphs">切口</text>
<rect x="749" y="280.6" width="8.8" height="4.2" fill="#00ffff"/>
<text x="753.4" y="284.25" font-size="4.2" fill="#00e4e4" text-anchor="middle" font-weight="bold" font-style="normal" textLength="8.2" lengthAdjust="spacingAndGlyphs">导正</text>
<text x="693.6" y="288.8" font-size="3.6" fill="#00ffff" text-anchor="middle" font-weight="bold" font-style="italic" stroke="#00ffff" stroke-width="0.35">20</text>
<text x="713.5" y="288.8" font-size="3.6" fill="#00ffff" text-anchor="middle" font-weight="bold" font-style="italic" stroke="#00ffff" stroke-width="0.35">20</text>
<text x="733.5" y="288.8" font-size="3.6" fill="#00ffff" text-anchor="middle" font-weight="bold" font-style="italic" stroke="#00ffff" stroke-width="0.35">20</text>
<text x="754.2" y="288.8" font-size="3.6" fill="#00ffff" text-anchor="middle" font-weight="bold" font-style="italic" stroke="#00ffff" stroke-width="0.35">20</text>
<line x1="683.1" y1="298.5" x2="778.6" y2="298.5" stroke="#00ff00" stroke-width="1"/>
<line x1="683.1" y1="332.9" x2="778.6" y2="332.9" stroke="#00ff00" stroke-width="1"/>
<line x1="744.4" y1="298.5" x2="764.8" y2="298.5" stroke="#00ff00" stroke-width="2"/>
<line x1="744.4" y1="332.9" x2="764.8" y2="332.9" stroke="#00ff00" stroke-width="2"/>
<line x1="683.1" y1="298.5" x2="683.1" y2="332.9" stroke="#00ff00" stroke-width="1"/>
<path d="M778.6,298.5 C774,306 777,312 780.5,318 C783.5,324 782,329 778.6,332.9" stroke="#00ff00" stroke-width="1" fill="none"/>
<line x1="770" y1="297.4" x2="790" y2="297.4" stroke="#00ffff" stroke-width="1"/>
<line x1="770" y1="333.2" x2="790" y2="333.2" stroke="#00ffff" stroke-width="1"/>
<line x1="788.7" y1="297.4" x2="788.7" y2="333.2" stroke="#00ffff" stroke-width="1"/>
<rect x="787.7" y="299" width="2" height="3" fill="#00ffff"/>
<rect x="787.7" y="328.5" width="2" height="3" fill="#00ffff"/>
<rect x="784.5" y="313" width="3.5" height="5.5" fill="#00ffff"/>
<line x1="676" y1="298.5" x2="683.1" y2="298.5" stroke="#00ffff" stroke-width="1"/>
<line x1="676" y1="331.8" x2="683.1" y2="331.8" stroke="#00ffff" stroke-width="1"/>
<line x1="678.2" y1="294" x2="678.2" y2="308.5" stroke="#00ffff" stroke-width="1"/>
<line x1="678.2" y1="326" x2="678.2" y2="341.6" stroke="#00ffff" stroke-width="1"/>
<text x="676.5" y="308" font-size="3.8" fill="#00ffff" text-anchor="start" font-weight="bold" font-style="italic" stroke="#00ffff" stroke-width="0.35" transform="rotate(-90 676.5 308)">1.5</text>
<text x="676.5" y="341.5" font-size="3.8" fill="#00ffff" text-anchor="start" font-weight="bold" font-style="italic" stroke="#00ffff" stroke-width="0.35" transform="rotate(-90 676.5 341.5)">1.5</text>
<path d="M683.8,299.2 H704.5 V324.3 L699,331.7 H689.5 L683.8,325 Z" stroke="#00ff00" stroke-width="1.2" fill="#00ffff"/>
<line x1="694.4" y1="290.8" x2="694.4" y2="338.6" stroke="#ff0000" stroke-width="1"/>
<line x1="714.2" y1="290.8" x2="714.2" y2="338.6" stroke="#ff0000" stroke-width="1"/>
<line x1="734.4" y1="290.8" x2="734.4" y2="338.6" stroke="#ff0000" stroke-width="1"/>
<line x1="755.5" y1="290.8" x2="755.5" y2="338.6" stroke="#ff0000" stroke-width="1"/>
<line x1="682.3" y1="321.3" x2="767" y2="321.3" stroke="#ff0000" stroke-width="1"/>
<polygon points="685.8,302.5 687,301.3 688.2,302.5 687,303.7" stroke="#000" stroke-width="0.5" fill="#000"/>
<polygon points="699.8,302.5 701,301.3 702.2,302.5 701,303.7" stroke="#000" stroke-width="0.5" fill="#000"/>
<polygon points="685.3,309 686.5,307.8 687.7,309 686.5,310.2" stroke="#000" stroke-width="0.5" fill="#000"/>
<polygon points="700.8,309 702,307.8 703.2,309 702,310.2" stroke="#000" stroke-width="0.5" fill="#000"/>
<polygon points="686.8,316 688,314.8 689.2,316 688,317.2" stroke="#000" stroke-width="0.5" fill="#000"/>
<polygon points="699.3,316 700.5,314.8 701.7,316 700.5,317.2" stroke="#000" stroke-width="0.5" fill="#000"/>
<polygon points="686.3,325 687.5,323.8 688.7,325 687.5,326.2" stroke="#000" stroke-width="0.5" fill="#000"/>
<polygon points="699.8,324.5 701,323.3 702.2,324.5 701,325.7" stroke="#000" stroke-width="0.5" fill="#000"/>
<polygon points="693.2,314.5 694.4,313.3 695.6,314.5 694.4,315.7" stroke="#000" stroke-width="0.5" fill="#000"/>
<polygon points="692.8,329 694,327.8 695.2,329 694,330.2" stroke="#000" stroke-width="0.5" fill="#000"/>
<path d="M688,300.5 L690.5,303.3 H698 L700.5,300.5 M688,309.5 L690.5,307 H698 L700.5,309.5" stroke="#00ff00" stroke-width="1.3" fill="none"/>
<circle cx="694.4" cy="321.3" r="5.6" stroke="#00ff00" stroke-width="1" fill="none"/>
<circle cx="694.4" cy="321.3" r="3.6" stroke="#00ff00" stroke-width="1" fill="none"/>
<circle cx="688" cy="313.6" r="1.8" stroke="#00ff00" stroke-width="1.3" fill="none"/>
<circle cx="700.7" cy="313.6" r="1.8" stroke="#00ff00" stroke-width="1.3" fill="none"/>
<line x1="686" y1="306.5" x2="703" y2="306.5" stroke="#ff0000" stroke-width="1"/>
<line x1="685" y1="313.6" x2="704" y2="313.6" stroke="#ff0000" stroke-width="1" stroke-dasharray="3 1.5"/>
<path d="M708,302.6 L710.3,302.4 L711.5,305 H717.3 L718.5,302.4 L720.9,302.6 L721.2,309.5 L719.8,311.3 M708,302.6 L707.8,309.5 L709.2,311.3 M711,308.3 H718 L719.5,311.3 M711,308.3 L709.6,311.3" stroke="#00ff00" stroke-width="1.3" fill="none"/>
<circle cx="709.3" cy="313.8" r="2.4" stroke="#00ff00" stroke-width="1.2" fill="#00ff00"/>
<circle cx="719.8" cy="313.8" r="2.4" stroke="#00ff00" stroke-width="1.2" fill="#00ff00"/>
<circle cx="714.2" cy="321.3" r="5.6" stroke="#00ff00" stroke-width="1" fill="none"/>
<circle cx="714.2" cy="321.3" r="3.6" stroke="#00ff00" stroke-width="1" fill="none"/>
<circle cx="714.2" cy="321.3" r="1.6" stroke="#ff0000" stroke-width="1" fill="none"/>
<path d="M728.6,302.9 Q730,301.8 731.6,302.9 V304.9 H737.9 V302.9 Q739.5,301.8 741.2,302.9 V310.2 Q739.5,311.2 737.9,310.2 V308.4 H731.6 V310.2 Q730,311.2 728.6,310.2 Z" stroke="#00ff00" stroke-width="1.2" fill="#00ffff"/>
<rect x="731.8" y="305.2" width="5.9" height="2.9" fill="#000"/>
<line x1="726" y1="306.5" x2="743" y2="306.5" stroke="#ff0000" stroke-width="1"/>
<line x1="724" y1="313.6" x2="744" y2="313.6" stroke="#ff0000" stroke-width="1" stroke-dasharray="3 1.5"/>
<circle cx="729.7" cy="313.6" r="1.3" stroke="#00ff00" stroke-width="1" fill="#000"/>
<circle cx="740.3" cy="313.6" r="1.3" stroke="#00ff00" stroke-width="1" fill="#000"/>
<circle cx="734.4" cy="321.3" r="5.6" stroke="#00ff00" stroke-width="1" fill="none"/>
<circle cx="734.4" cy="321.3" r="4" stroke="#00ff00" stroke-width="1" fill="none"/>
<circle cx="734.4" cy="321.3" r="1.8" stroke="#00ffff" stroke-width="1" fill="#00ffff"/>
<circle cx="755.5" cy="321.3" r="5.6" stroke="#00ff00" stroke-width="1" fill="none"/>
<circle cx="755.5" cy="321.3" r="3.6" stroke="#00ff00" stroke-width="1" fill="none"/>
<circle cx="755.5" cy="321.3" r="1.2" stroke="#ff0000" stroke-width="1" fill="none"/>
<rect x="755" y="312.5" width="1" height="1.3" fill="#00ff00"/>
<rect x="730.9" y="351.2" width="7.1" height="4.6" fill="#00ffff"/>
<text x="734.45" y="355.25" font-size="4.6" fill="#00e4e4" text-anchor="middle" font-weight="bold" font-style="normal" textLength="6.5" lengthAdjust="spacingAndGlyphs">排样</text>
<line x1="735.4" y1="393" x2="735.4" y2="439.8" stroke="#ff0000" stroke-width="1"/>
<line x1="727.4" y1="407.6" x2="743" y2="407.6" stroke="#ff0000" stroke-width="1"/>
<line x1="726.3" y1="414.6" x2="744" y2="414.6" stroke="#ff0000" stroke-width="1"/>
<line x1="723" y1="422.4" x2="747" y2="422.4" stroke="#ff0000" stroke-width="1"/>
<line x1="725.1" y1="392" x2="744.6" y2="392" stroke="#00ffff" stroke-width="1"/>
<line x1="725.1" y1="392" x2="725.1" y2="406" stroke="#00ffff" stroke-width="1"/>
<line x1="744.6" y1="392" x2="744.6" y2="406" stroke="#00ffff" stroke-width="1"/>
<text x="735" y="390.6" font-size="4.2" fill="#00ffff" text-anchor="middle" font-weight="bold" font-style="italic" stroke="#00ffff" stroke-width="0.35" textLength="6.5" lengthAdjust="spacingAndGlyphs">20.4</text>
<line x1="730.4" y1="396" x2="739.7" y2="396" stroke="#00ffff" stroke-width="1"/>
<line x1="730.4" y1="396" x2="730.4" y2="403.5" stroke="#00ffff" stroke-width="1"/>
<line x1="739.7" y1="396" x2="739.7" y2="403.5" stroke="#00ffff" stroke-width="1"/>
<path d="M725.1,402.5 Q725.1,400.2 727.4,400.2 H742.3 Q744.6,400.2 744.6,402.5 V423 Q743.5,428.5 739.5,431.6 H730.5 Q726.2,428.5 725.1,423 Z" stroke="#00ff00" stroke-width="1.2" fill="none"/>
<path d="M729.8,402.8 L731.8,402.4 L732.7,404.6 H738.1 L739,402.4 L741,402.8 L741.2,408.7 L740,410.2 M729.8,402.8 L729.6,408.7 L730.8,410.2 M732.3,407.8 H738.5 L739.6,410.2 M732.3,407.8 L731.2,410.2" stroke="#00ff00" stroke-width="1.3" fill="none"/>
<line x1="732.7" y1="404.6" x2="738.1" y2="404.6" stroke="#00ff00" stroke-width="1.6"/>
<circle cx="729.4" cy="414.6" r="1.6" stroke="#00ff00" stroke-width="1.4" fill="none"/>
<circle cx="740.3" cy="414.6" r="1.6" stroke="#00ff00" stroke-width="1.4" fill="none"/>
<rect x="728.9" y="414.1" width="1" height="1" fill="#ff0000"/>
<rect x="739.8" y="414.1" width="1" height="1" fill="#ff0000"/>
<circle cx="735" cy="422.4" r="2.2" stroke="#00ff00" stroke-width="1.2" fill="none"/>
<line x1="729.4" y1="414.6" x2="742.6" y2="431.2" stroke="#00ffff" stroke-width="1.46"/>
<text x="743.3" y="432.8" font-size="4.6" fill="#00ffff" text-anchor="start" font-weight="bold" font-style="italic" stroke="#00ffff" stroke-width="0.35" textLength="6.5" lengthAdjust="spacingAndGlyphs">R5</text>
<line x1="709.3" y1="400.2" x2="709.3" y2="431.6" stroke="#00ffff" stroke-width="1"/>
<line x1="708" y1="400.2" x2="728.6" y2="400.2" stroke="#00ffff" stroke-width="1"/>
<line x1="708" y1="431.6" x2="730.5" y2="431.6" stroke="#00ffff" stroke-width="1"/>
<text x="708" y="419.5" font-size="4.4" fill="#00ffff" text-anchor="start" font-weight="bold" font-style="italic" stroke="#00ffff" stroke-width="0.35" transform="rotate(-90 708 419.5)" textLength="7" lengthAdjust="spacingAndGlyphs">26.4</text>
<line x1="721" y1="401.3" x2="721" y2="413.6" stroke="#00ffff" stroke-width="1"/>
<line x1="721" y1="406" x2="731" y2="406" stroke="#00ffff" stroke-width="1"/>
<line x1="721" y1="409.5" x2="731" y2="409.5" stroke="#00ffff" stroke-width="1"/>
<line x1="719.5" y1="403" x2="722.5" y2="403" stroke="#00ffff" stroke-width="1"/>
<line x1="719.5" y1="412" x2="722.5" y2="412" stroke="#00ffff" stroke-width="1"/>
<text x="717" y="410" font-size="3.8" fill="#00ffff" text-anchor="start" font-weight="bold" font-style="italic" stroke="#00ffff" stroke-width="0.35">3</text>
<rect x="746.2" y="393" width="3.8" height="4" stroke="#00ffff" stroke-width="1" fill="none"/>
<line x1="744" y1="398.8" x2="750" y2="398.8" stroke="#00ffff" stroke-width="1"/>
<line x1="744.5" y1="399" x2="739.5" y2="405" stroke="#00ffff" stroke-width="0.85"/>
<text x="746.8" y="396.5" font-size="3.4" fill="#00ffff" text-anchor="start" font-weight="bold" font-style="italic" stroke="#00ffff" stroke-width="0.35">R</text>
<rect x="731.3" y="445" width="6.3" height="4.4" fill="#00ffff"/>
<text x="734.45" y="448.85" font-size="4.4" fill="#00e4e4" text-anchor="middle" font-weight="bold" font-style="normal" textLength="5.7" lengthAdjust="spacingAndGlyphs">凸模</text>
<text x="862.9" y="481.34" font-size="4.4" fill="#00ffff" text-anchor="middle" font-weight="bold" font-style="italic" stroke="#00ffff" stroke-width="0.5" textLength="4.6" lengthAdjust="spacingAndGlyphs">31</text>
<text x="883.65" y="481.34" font-size="4.8" fill="#00ffff" text-anchor="middle" font-weight="bold" font-style="italic" stroke="#00ffff" stroke-width="0.5" textLength="18.5" lengthAdjust="spacingAndGlyphs">WK/C04-31</text>
<text x="919.25" y="481.34" font-size="4.8" fill="#00ffff" text-anchor="middle" font-weight="bold" font-style="normal" stroke="#00ffff" stroke-width="0.5" textLength="7.8" lengthAdjust="spacingAndGlyphs">弹簧</text>
<text x="941.15" y="481.34" font-size="4.4" fill="#00ffff" text-anchor="middle" font-weight="bold" font-style="italic" stroke="#00ffff" stroke-width="0.5">4</text>
<text x="960.5" y="481.34" font-size="4.8" fill="#00ffff" text-anchor="middle" font-weight="bold" font-style="italic" stroke="#00ffff" stroke-width="0.5" textLength="9.4" lengthAdjust="spacingAndGlyphs">65Mn</text>
<text x="862.9" y="487.28" font-size="4.4" fill="#00ffff" text-anchor="middle" font-weight="bold" font-style="italic" stroke="#00ffff" stroke-width="0.5" textLength="4.6" lengthAdjust="spacingAndGlyphs">30</text>
<text x="883.65" y="487.28" font-size="4.8" fill="#00ffff" text-anchor="middle" font-weight="bold" font-style="italic" stroke="#00ffff" stroke-width="0.5" textLength="18.5" lengthAdjust="spacingAndGlyphs">WK/C04-30</text>
<text x="919.25" y="487.28" font-size="4.8" fill="#00ffff" text-anchor="middle" font-weight="bold" font-style="normal" stroke="#00ffff" stroke-width="0.5" textLength="11.2" lengthAdjust="spacingAndGlyphs">承料板</text>
<text x="941.15" y="487.28" font-size="4.4" fill="#00ffff" text-anchor="middle" font-weight="bold" font-style="italic" stroke="#00ffff" stroke-width="0.5">1</text>
<text x="960.5" y="487.28" font-size="4.8" fill="#00ffff" text-anchor="middle" font-weight="bold" font-style="italic" stroke="#00ffff" stroke-width="0.5" textLength="5.2" lengthAdjust="spacingAndGlyphs">45</text>
<text x="996" y="487.28" font-size="4.9" fill="#00ffff" text-anchor="start" font-weight="bold" font-style="italic" stroke="#00ffff" stroke-width="0.5" textLength="16.3" lengthAdjust="spacingAndGlyphs">43~48HRC</text>
<text x="862.9" y="493.22" font-size="4.4" fill="#00ffff" text-anchor="middle" font-weight="bold" font-style="italic" stroke="#00ffff" stroke-width="0.5" textLength="4.6" lengthAdjust="spacingAndGlyphs">29</text>
<text x="883.65" y="493.22" font-size="4.8" fill="#00ffff" text-anchor="middle" font-weight="bold" font-style="italic" stroke="#00ffff" stroke-width="0.5" textLength="18.5" lengthAdjust="spacingAndGlyphs">WK/C04-29</text>
<text x="919.25" y="493.22" font-size="4.8" fill="#00ffff" text-anchor="middle" font-weight="bold" font-style="normal" stroke="#00ffff" stroke-width="0.5" textLength="11.2" lengthAdjust="spacingAndGlyphs">导料板</text>
<text x="941.15" y="493.22" font-size="4.4" fill="#00ffff" text-anchor="middle" font-weight="bold" font-style="italic" stroke="#00ffff" stroke-width="0.5">2</text>
<text x="960.5" y="493.22" font-size="4.8" fill="#00ffff" text-anchor="middle" font-weight="bold" font-style="italic" stroke="#00ffff" stroke-width="0.5" textLength="5.2" lengthAdjust="spacingAndGlyphs">45</text>
<text x="996" y="493.22" font-size="4.9" fill="#00ffff" text-anchor="start" font-weight="bold" font-style="italic" stroke="#00ffff" stroke-width="0.5" textLength="16.3" lengthAdjust="spacingAndGlyphs">43~48HRC</text>
<text x="862.9" y="499.15" font-size="4.4" fill="#00ffff" text-anchor="middle" font-weight="bold" font-style="italic" stroke="#00ffff" stroke-width="0.5" textLength="4.6" lengthAdjust="spacingAndGlyphs">28</text>
<text x="883.65" y="499.15" font-size="4.8" fill="#00ffff" text-anchor="middle" font-weight="bold" font-style="italic" stroke="#00ffff" stroke-width="0.5" textLength="18.5" lengthAdjust="spacingAndGlyphs">WK/C04-28</text>
<text x="919.25" y="499.15" font-size="4.8" fill="#00ffff" text-anchor="middle" font-weight="bold" font-style="normal" stroke="#00ffff" stroke-width="0.5" textLength="12.5" lengthAdjust="spacingAndGlyphs">侧刃挡块</text>
<text x="941.15" y="499.15" font-size="4.4" fill="#00ffff" text-anchor="middle" font-weight="bold" font-style="italic" stroke="#00ffff" stroke-width="0.5">2</text>
<text x="960.5" y="499.15" font-size="4.8" fill="#00ffff" text-anchor="middle" font-weight="bold" font-style="italic" stroke="#00ffff" stroke-width="0.5" textLength="14" lengthAdjust="spacingAndGlyphs">Cr12MoV</text>
<text x="996" y="499.15" font-size="4.9" fill="#00ffff" text-anchor="start" font-weight="bold" font-style="italic" stroke="#00ffff" stroke-width="0.5" textLength="16.3" lengthAdjust="spacingAndGlyphs">58~62HRC</text>
<text x="862.9" y="505.09" font-size="4.4" fill="#00ffff" text-anchor="middle" font-weight="bold" font-style="italic" stroke="#00ffff" stroke-width="0.5" textLength="4.6" lengthAdjust="spacingAndGlyphs">27</text>
<text x="883.65" y="505.09" font-size="4.8" fill="#00ffff" text-anchor="middle" font-weight="bold" font-style="italic" stroke="#00ffff" stroke-width="0.5" textLength="18.5" lengthAdjust="spacingAndGlyphs">WK/C04-27</text>
<text x="919.25" y="505.09" font-size="4.8" fill="#00ffff" text-anchor="middle" font-weight="bold" font-style="normal" stroke="#00ffff" stroke-width="0.5" textLength="11.2" lengthAdjust="spacingAndGlyphs">导正销</text>
<text x="941.15" y="505.09" font-size="4.4" fill="#00ffff" text-anchor="middle" font-weight="bold" font-style="italic" stroke="#00ffff" stroke-width="0.5">2</text>
<text x="960.5" y="505.09" font-size="4.8" fill="#00ffff" text-anchor="middle" font-weight="bold" font-style="italic" stroke="#00ffff" stroke-width="0.5" textLength="7.3" lengthAdjust="spacingAndGlyphs">T8A</text>
<text x="862.9" y="511.03" font-size="4.4" fill="#00ffff" text-anchor="middle" font-weight="bold" font-style="italic" stroke="#00ffff" stroke-width="0.5" textLength="4.6" lengthAdjust="spacingAndGlyphs">26</text>
<text x="883.65" y="511.03" font-size="4.8" fill="#00ffff" text-anchor="middle" font-weight="bold" font-style="italic" stroke="#00ffff" stroke-width="0.5" textLength="18.5" lengthAdjust="spacingAndGlyphs">WK/C04-26</text>
<text x="919.25" y="511.03" font-size="4.8" fill="#00ffff" text-anchor="middle" font-weight="bold" font-style="normal" stroke="#00ffff" stroke-width="0.5" textLength="12.5" lengthAdjust="spacingAndGlyphs">落料凸模</text>
<text x="941.15" y="511.03" font-size="4.4" fill="#00ffff" text-anchor="middle" font-weight="bold" font-style="italic" stroke="#00ffff" stroke-width="0.5">1</text>
<text x="960.5" y="511.03" font-size="4.8" fill="#00ffff" text-anchor="middle" font-weight="bold" font-style="italic" stroke="#00ffff" stroke-width="0.5" textLength="14" lengthAdjust="spacingAndGlyphs">Cr12MoV</text>
<text x="996" y="511.03" font-size="4.9" fill="#00ffff" text-anchor="start" font-weight="bold" font-style="italic" stroke="#00ffff" stroke-width="0.5" textLength="16.3" lengthAdjust="spacingAndGlyphs">58~62HRC</text>
<text x="862.9" y="516.97" font-size="4.4" fill="#00ffff" text-anchor="middle" font-weight="bold" font-style="italic" stroke="#00ffff" stroke-width="0.5" textLength="4.6" lengthAdjust="spacingAndGlyphs">25</text>
<text x="883.65" y="516.97" font-size="4.8" fill="#00ffff" text-anchor="middle" font-weight="bold" font-style="italic" stroke="#00ffff" stroke-width="0.5" textLength="18.5" lengthAdjust="spacingAndGlyphs">WK/C04-25</text>
<text x="919.25" y="516.97" font-size="4.8" fill="#00ffff" text-anchor="middle" font-weight="bold" font-style="normal" stroke="#00ffff" stroke-width="0.5" textLength="12.5" lengthAdjust="spacingAndGlyphs">冲孔凸模</text>
<text x="941.15" y="516.97" font-size="4.4" fill="#00ffff" text-anchor="middle" font-weight="bold" font-style="italic" stroke="#00ffff" stroke-width="0.5">2</text>
<text x="960.5" y="516.97" font-size="4.8" fill="#00ffff" text-anchor="middle" font-weight="bold" font-style="italic" stroke="#00ffff" stroke-width="0.5" textLength="14" lengthAdjust="spacingAndGlyphs">Cr12MoV</text>
<text x="996" y="516.97" font-size="4.9" fill="#00ffff" text-anchor="start" font-weight="bold" font-style="italic" stroke="#00ffff" stroke-width="0.5" textLength="16.3" lengthAdjust="spacingAndGlyphs">58~62HRC</text>
<text x="862.9" y="522.91" font-size="4.4" fill="#00ffff" text-anchor="middle" font-weight="bold" font-style="italic" stroke="#00ffff" stroke-width="0.5" textLength="4.6" lengthAdjust="spacingAndGlyphs">24</text>
<text x="883.65" y="522.91" font-size="4.8" fill="#00ffff" text-anchor="middle" font-weight="bold" font-style="italic" stroke="#00ffff" stroke-width="0.5" textLength="18.5" lengthAdjust="spacingAndGlyphs">WK/C04-24</text>
<text x="919.25" y="522.91" font-size="4.8" fill="#00ffff" text-anchor="middle" font-weight="bold" font-style="normal" stroke="#00ffff" stroke-width="0.5" textLength="7.8" lengthAdjust="spacingAndGlyphs">侧刃</text>
<text x="941.15" y="522.91" font-size="4.4" fill="#00ffff" text-anchor="middle" font-weight="bold" font-style="italic" stroke="#00ffff" stroke-width="0.5">2</text>
<text x="960.5" y="522.91" font-size="4.8" fill="#00ffff" text-anchor="middle" font-weight="bold" font-style="italic" stroke="#00ffff" stroke-width="0.5" textLength="9.4" lengthAdjust="spacingAndGlyphs">T10A</text>
<text x="996" y="522.91" font-size="4.9" fill="#00ffff" text-anchor="start" font-weight="bold" font-style="italic" stroke="#00ffff" stroke-width="0.5" textLength="16.3" lengthAdjust="spacingAndGlyphs">56~60HRC</text>
<text x="862.9" y="528.85" font-size="4.4" fill="#00ffff" text-anchor="middle" font-weight="bold" font-style="italic" stroke="#00ffff" stroke-width="0.5" textLength="4.6" lengthAdjust="spacingAndGlyphs">23</text>
<text x="883.65" y="528.85" font-size="4.8" fill="#00ffff" text-anchor="middle" font-weight="bold" font-style="italic" stroke="#00ffff" stroke-width="0.5" textLength="18.5" lengthAdjust="spacingAndGlyphs">WK/C04-23</text>
<text x="919.25" y="528.85" font-size="4.8" fill="#00ffff" text-anchor="middle" font-weight="bold" font-style="normal" stroke="#00ffff" stroke-width="0.5" textLength="11.2" lengthAdjust="spacingAndGlyphs">导料销</text>
<text x="941.15" y="528.85" font-size="4.4" fill="#00ffff" text-anchor="middle" font-weight="bold" font-style="italic" stroke="#00ffff" stroke-width="0.5">2</text>
<text x="960.5" y="528.85" font-size="4.8" fill="#00ffff" text-anchor="middle" font-weight="bold" font-style="italic" stroke="#00ffff" stroke-width="0.5" textLength="5.2" lengthAdjust="spacingAndGlyphs">45</text>
<text x="996" y="528.85" font-size="4.9" fill="#00ffff" text-anchor="start" font-weight="bold" font-style="italic" stroke="#00ffff" stroke-width="0.5" textLength="16.3" lengthAdjust="spacingAndGlyphs">43~48HRC</text>
<text x="862.9" y="534.79" font-size="4.4" fill="#00ffff" text-anchor="middle" font-weight="bold" font-style="italic" stroke="#00ffff" stroke-width="0.5" textLength="4.6" lengthAdjust="spacingAndGlyphs">22</text>
<text x="883.65" y="534.79" font-size="4.8" fill="#00ffff" text-anchor="middle" font-weight="bold" font-style="italic" stroke="#00ffff" stroke-width="0.5" textLength="18.5" lengthAdjust="spacingAndGlyphs">WK/C04-22</text>
<text x="919.25" y="534.79" font-size="4.8" fill="#00ffff" text-anchor="middle" font-weight="bold" font-style="normal" stroke="#00ffff" stroke-width="0.5" textLength="11.2" lengthAdjust="spacingAndGlyphs">挡料销</text>
<text x="941.15" y="534.79" font-size="4.4" fill="#00ffff" text-anchor="middle" font-weight="bold" font-style="italic" stroke="#00ffff" stroke-width="0.5">1</text>
<text x="960.5" y="534.79" font-size="4.8" fill="#00ffff" text-anchor="middle" font-weight="bold" font-style="italic" stroke="#00ffff" stroke-width="0.5" textLength="5.2" lengthAdjust="spacingAndGlyphs">45</text>
<text x="996" y="534.79" font-size="4.9" fill="#00ffff" text-anchor="start" font-weight="bold" font-style="italic" stroke="#00ffff" stroke-width="0.5" textLength="16.3" lengthAdjust="spacingAndGlyphs">43~48HRC</text>
<text x="862.9" y="540.73" font-size="4.4" fill="#00ffff" text-anchor="middle" font-weight="bold" font-style="italic" stroke="#00ffff" stroke-width="0.5" textLength="4.6" lengthAdjust="spacingAndGlyphs">21</text>
<text x="883.65" y="540.73" font-size="4.8" fill="#00ffff" text-anchor="middle" font-weight="bold" font-style="italic" stroke="#00ffff" stroke-width="0.5" textLength="18.5" lengthAdjust="spacingAndGlyphs">WK/C04-21</text>
<text x="919.25" y="540.73" font-size="4.8" fill="#00ffff" text-anchor="middle" font-weight="bold" font-style="normal" stroke="#00ffff" stroke-width="0.5" textLength="11.2" lengthAdjust="spacingAndGlyphs">小导柱</text>
<text x="941.15" y="540.73" font-size="4.4" fill="#00ffff" text-anchor="middle" font-weight="bold" font-style="italic" stroke="#00ffff" stroke-width="0.5">4</text>
<text x="960.5" y="540.73" font-size="4.8" fill="#00ffff" text-anchor="middle" font-weight="bold" font-style="italic" stroke="#00ffff" stroke-width="0.5" textLength="5.2" lengthAdjust="spacingAndGlyphs">20</text>
<text x="996" y="540.73" font-size="4.9" fill="#00ffff" text-anchor="start" font-weight="bold" font-style="italic" stroke="#00ffff" stroke-width="0.5" textLength="16.3" lengthAdjust="spacingAndGlyphs">58~62HRC</text>
<text x="862.9" y="546.66" font-size="4.4" fill="#00ffff" text-anchor="middle" font-weight="bold" font-style="italic" stroke="#00ffff" stroke-width="0.5" textLength="4.6" lengthAdjust="spacingAndGlyphs">20</text>
<text x="883.65" y="546.66" font-size="4.8" fill="#00ffff" text-anchor="middle" font-weight="bold" font-style="italic" stroke="#00ffff" stroke-width="0.5" textLength="18.5" lengthAdjust="spacingAndGlyphs">WK/C04-20</text>
<text x="919.25" y="546.66" font-size="4.8" fill="#00ffff" text-anchor="middle" font-weight="bold" font-style="normal" stroke="#00ffff" stroke-width="0.5" textLength="11.2" lengthAdjust="spacingAndGlyphs">小导套</text>
<text x="941.15" y="546.66" font-size="4.4" fill="#00ffff" text-anchor="middle" font-weight="bold" font-style="italic" stroke="#00ffff" stroke-width="0.5">4</text>
<text x="960.5" y="546.66" font-size="4.8" fill="#00ffff" text-anchor="middle" font-weight="bold" font-style="italic" stroke="#00ffff" stroke-width="0.5" textLength="5.2" lengthAdjust="spacingAndGlyphs">20</text>
<text x="996" y="546.66" font-size="4.9" fill="#00ffff" text-anchor="start" font-weight="bold" font-style="italic" stroke="#00ffff" stroke-width="0.5" textLength="16.3" lengthAdjust="spacingAndGlyphs">58~62HRC</text>
<text x="862.9" y="552.6" font-size="4.4" fill="#00ffff" text-anchor="middle" font-weight="bold" font-style="italic" stroke="#00ffff" stroke-width="0.5" textLength="4.6" lengthAdjust="spacingAndGlyphs">19</text>
<text x="883.65" y="552.6" font-size="4.8" fill="#00ffff" text-anchor="middle" font-weight="bold" font-style="italic" stroke="#00ffff" stroke-width="0.5" textLength="18.5" lengthAdjust="spacingAndGlyphs">WK/C04-19</text>
<text x="919.25" y="552.6" font-size="4.8" fill="#00ffff" text-anchor="middle" font-weight="bold" font-style="normal" stroke="#00ffff" stroke-width="0.5" textLength="11.2" lengthAdjust="spacingAndGlyphs">下模座</text>
<text x="941.15" y="552.6" font-size="4.4" fill="#00ffff" text-anchor="middle" font-weight="bold" font-style="italic" stroke="#00ffff" stroke-width="0.5">1</text>
<text x="960.5" y="552.6" font-size="4.8" fill="#00ffff" text-anchor="middle" font-weight="bold" font-style="italic" stroke="#00ffff" stroke-width="0.5" textLength="11.5" lengthAdjust="spacingAndGlyphs">HT200</text>
<text x="862.9" y="558.54" font-size="4.4" fill="#00ffff" text-anchor="middle" font-weight="bold" font-style="italic" stroke="#00ffff" stroke-width="0.5" textLength="4.6" lengthAdjust="spacingAndGlyphs">18</text>
<text x="883.65" y="558.54" font-size="4.8" fill="#00ffff" text-anchor="middle" font-weight="bold" font-style="italic" stroke="#00ffff" stroke-width="0.5" textLength="12.6" lengthAdjust="spacingAndGlyphs">GB/T70</text>
<text x="919.25" y="558.54" font-size="4.8" fill="#00ffff" text-anchor="middle" font-weight="bold" font-style="normal" stroke="#00ffff" stroke-width="0.5" textLength="20" lengthAdjust="spacingAndGlyphs">螺钉M12×60</text>
<text x="941.15" y="558.54" font-size="4.4" fill="#00ffff" text-anchor="middle" font-weight="bold" font-style="italic" stroke="#00ffff" stroke-width="0.5">6</text>
<text x="960.5" y="558.54" font-size="4.8" fill="#00ffff" text-anchor="middle" font-weight="bold" font-style="italic" stroke="#00ffff" stroke-width="0.5" textLength="5.2" lengthAdjust="spacingAndGlyphs">45</text>
<text x="862.9" y="564.48" font-size="4.4" fill="#00ffff" text-anchor="middle" font-weight="bold" font-style="italic" stroke="#00ffff" stroke-width="0.5" textLength="4.6" lengthAdjust="spacingAndGlyphs">17</text>
<text x="883.65" y="564.48" font-size="4.8" fill="#00ffff" text-anchor="middle" font-weight="bold" font-style="italic" stroke="#00ffff" stroke-width="0.5" textLength="18.5" lengthAdjust="spacingAndGlyphs">WK/C04-17</text>
<text x="919.25" y="564.48" font-size="4.8" fill="#00ffff" text-anchor="middle" font-weight="bold" font-style="normal" stroke="#00ffff" stroke-width="0.5" textLength="20" lengthAdjust="spacingAndGlyphs">销钉Ø10×70</text>
<text x="941.15" y="564.48" font-size="4.4" fill="#00ffff" text-anchor="middle" font-weight="bold" font-style="italic" stroke="#00ffff" stroke-width="0.5">4</text>
<text x="960.5" y="564.48" font-size="4.8" fill="#00ffff" text-anchor="middle" font-weight="bold" font-style="italic" stroke="#00ffff" stroke-width="0.5" textLength="5.2" lengthAdjust="spacingAndGlyphs">35</text>
<text x="996" y="564.48" font-size="4.9" fill="#00ffff" text-anchor="start" font-weight="bold" font-style="italic" stroke="#00ffff" stroke-width="0.5" textLength="16.3" lengthAdjust="spacingAndGlyphs">28~38HRC</text>
<text x="862.9" y="570.42" font-size="4.4" fill="#00ffff" text-anchor="middle" font-weight="bold" font-style="italic" stroke="#00ffff" stroke-width="0.5" textLength="4.6" lengthAdjust="spacingAndGlyphs">16</text>
<text x="883.65" y="570.42" font-size="4.8" fill="#00ffff" text-anchor="middle" font-weight="bold" font-style="italic" stroke="#00ffff" stroke-width="0.5" textLength="18.5" lengthAdjust="spacingAndGlyphs">GB/T119-16</text>
<text x="919.25" y="570.42" font-size="4.8" fill="#00ffff" text-anchor="middle" font-weight="bold" font-style="normal" stroke="#00ffff" stroke-width="0.5" textLength="7.8" lengthAdjust="spacingAndGlyphs">导柱</text>
<text x="941.15" y="570.42" font-size="4.4" fill="#00ffff" text-anchor="middle" font-weight="bold" font-style="italic" stroke="#00ffff" stroke-width="0.5">2</text>
<text x="960.5" y="570.42" font-size="4.8" fill="#00ffff" text-anchor="middle" font-weight="bold" font-style="italic" stroke="#00ffff" stroke-width="0.5" textLength="5.2" lengthAdjust="spacingAndGlyphs">20</text>
<text x="1004.1" y="570.42" font-size="4.6" fill="#00ffff" text-anchor="middle" font-weight="bold" font-style="normal" stroke="#00ffff" stroke-width="0.5" textLength="6" lengthAdjust="spacingAndGlyphs">渗碳</text>
<text x="862.9" y="576.36" font-size="4.4" fill="#00ffff" text-anchor="middle" font-weight="bold" font-style="italic" stroke="#00ffff" stroke-width="0.5" textLength="4.6" lengthAdjust="spacingAndGlyphs">15</text>
<text x="883.65" y="576.36" font-size="4.8" fill="#00ffff" text-anchor="middle" font-weight="bold" font-style="italic" stroke="#00ffff" stroke-width="0.5" textLength="18.5" lengthAdjust="spacingAndGlyphs">GB/T119-15</text>
<text x="919.25" y="576.36" font-size="4.8" fill="#00ffff" text-anchor="middle" font-weight="bold" font-style="normal" stroke="#00ffff" stroke-width="0.5" textLength="7.8" lengthAdjust="spacingAndGlyphs">导套</text>
<text x="941.15" y="576.36" font-size="4.4" fill="#00ffff" text-anchor="middle" font-weight="bold" font-style="italic" stroke="#00ffff" stroke-width="0.5">2</text>
<text x="960.5" y="576.36" font-size="4.8" fill="#00ffff" text-anchor="middle" font-weight="bold" font-style="italic" stroke="#00ffff" stroke-width="0.5" textLength="5.2" lengthAdjust="spacingAndGlyphs">20</text>
<text x="1004.1" y="576.36" font-size="4.6" fill="#00ffff" text-anchor="middle" font-weight="bold" font-style="normal" stroke="#00ffff" stroke-width="0.5" textLength="6" lengthAdjust="spacingAndGlyphs">渗碳</text>
<text x="862.9" y="582.3" font-size="4.4" fill="#00ffff" text-anchor="middle" font-weight="bold" font-style="italic" stroke="#00ffff" stroke-width="0.5" textLength="4.6" lengthAdjust="spacingAndGlyphs">14</text>
<text x="883.65" y="582.3" font-size="4.8" fill="#00ffff" text-anchor="middle" font-weight="bold" font-style="italic" stroke="#00ffff" stroke-width="0.5" textLength="8.4" lengthAdjust="spacingAndGlyphs">T10A</text>
<text x="919.25" y="582.3" font-size="4.8" fill="#00ffff" text-anchor="middle" font-weight="bold" font-style="normal" stroke="#00ffff" stroke-width="0.5" textLength="20" lengthAdjust="spacingAndGlyphs">卸料螺钉M10</text>
<text x="941.15" y="582.3" font-size="4.4" fill="#00ffff" text-anchor="middle" font-weight="bold" font-style="italic" stroke="#00ffff" stroke-width="0.5">4</text>
<text x="960.5" y="582.3" font-size="4.8" fill="#00ffff" text-anchor="middle" font-weight="bold" font-style="italic" stroke="#00ffff" stroke-width="0.5" textLength="5.2" lengthAdjust="spacingAndGlyphs">45</text>
<text x="862.9" y="588.24" font-size="4.4" fill="#00ffff" text-anchor="middle" font-weight="bold" font-style="italic" stroke="#00ffff" stroke-width="0.5" textLength="4.6" lengthAdjust="spacingAndGlyphs">13</text>
<text x="883.65" y="588.24" font-size="4.8" fill="#00ffff" text-anchor="middle" font-weight="bold" font-style="italic" stroke="#00ffff" stroke-width="0.5" textLength="14.7" lengthAdjust="spacingAndGlyphs">JB/T-13</text>
<text x="919.25" y="588.24" font-size="4.8" fill="#00ffff" text-anchor="middle" font-weight="bold" font-style="normal" stroke="#00ffff" stroke-width="0.5" textLength="20" lengthAdjust="spacingAndGlyphs">螺钉M10×45</text>
<text x="941.15" y="588.24" font-size="4.4" fill="#00ffff" text-anchor="middle" font-weight="bold" font-style="italic" stroke="#00ffff" stroke-width="0.5">4</text>
<text x="974.5" y="588.24" font-size="4.2" fill="#00ffff" text-anchor="middle" font-weight="bold" font-style="italic" stroke="#00ffff" stroke-width="0.5">4</text>
<text x="862.9" y="594.17" font-size="4.4" fill="#00ffff" text-anchor="middle" font-weight="bold" font-style="italic" stroke="#00ffff" stroke-width="0.5" textLength="4.6" lengthAdjust="spacingAndGlyphs">12</text>
<text x="883.65" y="594.17" font-size="4.8" fill="#00ffff" text-anchor="middle" font-weight="bold" font-style="italic" stroke="#00ffff" stroke-width="0.5" textLength="18.5" lengthAdjust="spacingAndGlyphs">WK/C04-12</text>
<text x="919.25" y="594.17" font-size="4.8" fill="#00ffff" text-anchor="middle" font-weight="bold" font-style="normal" stroke="#00ffff" stroke-width="0.5" textLength="7.8" lengthAdjust="spacingAndGlyphs">模柄</text>
<text x="941.15" y="594.17" font-size="4.4" fill="#00ffff" text-anchor="middle" font-weight="bold" font-style="italic" stroke="#00ffff" stroke-width="0.5">1</text>
<text x="960.5" y="594.17" font-size="4.8" fill="#00ffff" text-anchor="middle" font-weight="bold" font-style="italic" stroke="#00ffff" stroke-width="0.5" textLength="9.4" lengthAdjust="spacingAndGlyphs">Q235</text>
<text x="996" y="594.17" font-size="4.9" fill="#00ffff" text-anchor="start" font-weight="bold" font-style="italic" stroke="#00ffff" stroke-width="0.5" textLength="16.3" lengthAdjust="spacingAndGlyphs">43~48HRC</text>
<text x="862.9" y="600.11" font-size="4.4" fill="#00ffff" text-anchor="middle" font-weight="bold" font-style="italic" stroke="#00ffff" stroke-width="0.5" textLength="4.6" lengthAdjust="spacingAndGlyphs">11</text>
<text x="883.65" y="600.11" font-size="4.8" fill="#00ffff" text-anchor="middle" font-weight="bold" font-style="italic" stroke="#00ffff" stroke-width="0.5" textLength="18.5" lengthAdjust="spacingAndGlyphs">WK/C04-11</text>
<text x="919.25" y="600.11" font-size="4.8" fill="#00ffff" text-anchor="middle" font-weight="bold" font-style="normal" stroke="#00ffff" stroke-width="0.5" textLength="11.2" lengthAdjust="spacingAndGlyphs">上模座</text>
<text x="941.15" y="600.11" font-size="4.4" fill="#00ffff" text-anchor="middle" font-weight="bold" font-style="italic" stroke="#00ffff" stroke-width="0.5">1</text>
<text x="960.5" y="600.11" font-size="4.8" fill="#00ffff" text-anchor="middle" font-weight="bold" font-style="italic" stroke="#00ffff" stroke-width="0.5" textLength="11.5" lengthAdjust="spacingAndGlyphs">HT200</text>
<text x="996" y="600.11" font-size="4.9" fill="#00ffff" text-anchor="start" font-weight="bold" font-style="italic" stroke="#00ffff" stroke-width="0.5" textLength="16.3" lengthAdjust="spacingAndGlyphs">43~48HRC</text>
<text x="862.9" y="606.05" font-size="4.4" fill="#00ffff" text-anchor="middle" font-weight="bold" font-style="italic" stroke="#00ffff" stroke-width="0.5" textLength="4.6" lengthAdjust="spacingAndGlyphs">10</text>
<text x="883.65" y="606.05" font-size="4.8" fill="#00ffff" text-anchor="middle" font-weight="bold" font-style="italic" stroke="#00ffff" stroke-width="0.5" textLength="18.5" lengthAdjust="spacingAndGlyphs">WK/C04-10</text>
<text x="919.25" y="606.05" font-size="4.8" fill="#00ffff" text-anchor="middle" font-weight="bold" font-style="normal" stroke="#00ffff" stroke-width="0.5" textLength="7.8" lengthAdjust="spacingAndGlyphs">垫板</text>
<text x="941.15" y="606.05" font-size="4.4" fill="#00ffff" text-anchor="middle" font-weight="bold" font-style="italic" stroke="#00ffff" stroke-width="0.5">1</text>
<text x="960.5" y="606.05" font-size="4.8" fill="#00ffff" text-anchor="middle" font-weight="bold" font-style="italic" stroke="#00ffff" stroke-width="0.5" textLength="14" lengthAdjust="spacingAndGlyphs">Cr12MoV</text>
<text x="996" y="606.05" font-size="4.9" fill="#00ffff" text-anchor="start" font-weight="bold" font-style="italic" stroke="#00ffff" stroke-width="0.5" textLength="16.3" lengthAdjust="spacingAndGlyphs">58~62HRC</text>
<text x="862.9" y="611.99" font-size="4.4" fill="#00ffff" text-anchor="middle" font-weight="bold" font-style="italic" stroke="#00ffff" stroke-width="0.5">9</text>
<text x="883.65" y="611.99" font-size="4.8" fill="#00ffff" text-anchor="middle" font-weight="bold" font-style="italic" stroke="#00ffff" stroke-width="0.5" textLength="18.5" lengthAdjust="spacingAndGlyphs">WK/C04-09</text>
<text x="919.25" y="611.99" font-size="4.8" fill="#00ffff" text-anchor="middle" font-weight="bold" font-style="normal" stroke="#00ffff" stroke-width="0.5" textLength="12.5" lengthAdjust="spacingAndGlyphs">凸模固定板</text>
<text x="941.15" y="611.99" font-size="4.4" fill="#00ffff" text-anchor="middle" font-weight="bold" font-style="italic" stroke="#00ffff" stroke-width="0.5">1</text>
<text x="960.5" y="611.99" font-size="4.8" fill="#00ffff" text-anchor="middle" font-weight="bold" font-style="italic" stroke="#00ffff" stroke-width="0.5" textLength="14" lengthAdjust="spacingAndGlyphs">Cr12MoV</text>
<text x="996" y="611.99" font-size="4.9" fill="#00ffff" text-anchor="start" font-weight="bold" font-style="italic" stroke="#00ffff" stroke-width="0.5" textLength="16.3" lengthAdjust="spacingAndGlyphs">43~48HRC</text>
<text x="862.9" y="617.93" font-size="4.4" fill="#00ffff" text-anchor="middle" font-weight="bold" font-style="italic" stroke="#00ffff" stroke-width="0.5">8</text>
<text x="883.65" y="617.93" font-size="4.8" fill="#00ffff" text-anchor="middle" font-weight="bold" font-style="italic" stroke="#00ffff" stroke-width="0.5" textLength="18.5" lengthAdjust="spacingAndGlyphs">WK/C04-08</text>
<text x="919.25" y="617.93" font-size="4.8" fill="#00ffff" text-anchor="middle" font-weight="bold" font-style="normal" stroke="#00ffff" stroke-width="0.5" textLength="11.2" lengthAdjust="spacingAndGlyphs">卸料板</text>
<text x="941.15" y="617.93" font-size="4.4" fill="#00ffff" text-anchor="middle" font-weight="bold" font-style="italic" stroke="#00ffff" stroke-width="0.5">1</text>
<text x="960.5" y="617.93" font-size="4.8" fill="#00ffff" text-anchor="middle" font-weight="bold" font-style="italic" stroke="#00ffff" stroke-width="0.5" textLength="14" lengthAdjust="spacingAndGlyphs">Cr12MoV</text>
<text x="996" y="617.93" font-size="4.9" fill="#00ffff" text-anchor="start" font-weight="bold" font-style="italic" stroke="#00ffff" stroke-width="0.5" textLength="16.3" lengthAdjust="spacingAndGlyphs">43~48HRC</text>
<text x="862.9" y="623.87" font-size="4.4" fill="#00ffff" text-anchor="middle" font-weight="bold" font-style="italic" stroke="#00ffff" stroke-width="0.5">7</text>
<text x="883.65" y="623.87" font-size="4.8" fill="#00ffff" text-anchor="middle" font-weight="bold" font-style="italic" stroke="#00ffff" stroke-width="0.5" textLength="18.5" lengthAdjust="spacingAndGlyphs">WK/C04-07</text>
<text x="919.25" y="623.87" font-size="4.8" fill="#00ffff" text-anchor="middle" font-weight="bold" font-style="normal" stroke="#00ffff" stroke-width="0.5" textLength="7.8" lengthAdjust="spacingAndGlyphs">凹模</text>
<text x="941.15" y="623.87" font-size="4.4" fill="#00ffff" text-anchor="middle" font-weight="bold" font-style="italic" stroke="#00ffff" stroke-width="0.5">1</text>
<text x="960.5" y="623.87" font-size="4.8" fill="#00ffff" text-anchor="middle" font-weight="bold" font-style="italic" stroke="#00ffff" stroke-width="0.5" textLength="5.2" lengthAdjust="spacingAndGlyphs">45</text>
<text x="996" y="623.87" font-size="4.9" fill="#00ffff" text-anchor="start" font-weight="bold" font-style="italic" stroke="#00ffff" stroke-width="0.5" textLength="16.3" lengthAdjust="spacingAndGlyphs">58~62HRC</text>
<text x="862.9" y="629.81" font-size="4.4" fill="#00ffff" text-anchor="middle" font-weight="bold" font-style="italic" stroke="#00ffff" stroke-width="0.5">6</text>
<text x="883.65" y="629.81" font-size="4.8" fill="#00ffff" text-anchor="middle" font-weight="bold" font-style="italic" stroke="#00ffff" stroke-width="0.5" textLength="18.5" lengthAdjust="spacingAndGlyphs">WK/C04-06</text>
<text x="919.25" y="629.81" font-size="4.8" fill="#00ffff" text-anchor="middle" font-weight="bold" font-style="normal" stroke="#00ffff" stroke-width="0.5" textLength="12.5" lengthAdjust="spacingAndGlyphs">凹模垫板</text>
<text x="941.15" y="629.81" font-size="4.4" fill="#00ffff" text-anchor="middle" font-weight="bold" font-style="italic" stroke="#00ffff" stroke-width="0.5">1</text>
<text x="960.5" y="629.81" font-size="4.8" fill="#00ffff" text-anchor="middle" font-weight="bold" font-style="italic" stroke="#00ffff" stroke-width="0.5" textLength="5.2" lengthAdjust="spacingAndGlyphs">45</text>
<text x="996" y="629.81" font-size="4.9" fill="#00ffff" text-anchor="start" font-weight="bold" font-style="italic" stroke="#00ffff" stroke-width="0.5" textLength="16.3" lengthAdjust="spacingAndGlyphs">43~48HRC</text>
<text x="862.9" y="635.75" font-size="4.4" fill="#00ffff" text-anchor="middle" font-weight="bold" font-style="italic" stroke="#00ffff" stroke-width="0.5">5</text>
<text x="883.65" y="635.75" font-size="4.8" fill="#00ffff" text-anchor="middle" font-weight="bold" font-style="italic" stroke="#00ffff" stroke-width="0.5" textLength="18.5" lengthAdjust="spacingAndGlyphs">WK/C04-05</text>
<text x="919.25" y="635.75" font-size="4.8" fill="#00ffff" text-anchor="middle" font-weight="bold" font-style="normal" stroke="#00ffff" stroke-width="0.5" textLength="7.8" lengthAdjust="spacingAndGlyphs">橡胶</text>
<text x="941.15" y="635.75" font-size="4.4" fill="#00ffff" text-anchor="middle" font-weight="bold" font-style="italic" stroke="#00ffff" stroke-width="0.5">4</text>
<text x="960.5" y="635.75" font-size="4.8" fill="#00ffff" text-anchor="middle" font-weight="bold" font-style="italic" stroke="#00ffff" stroke-width="0.5" textLength="5.2" lengthAdjust="spacingAndGlyphs">45</text>
<text x="996" y="635.75" font-size="4.9" fill="#00ffff" text-anchor="start" font-weight="bold" font-style="italic" stroke="#00ffff" stroke-width="0.5" textLength="16.3" lengthAdjust="spacingAndGlyphs">43~48HRC</text>
<text x="862.9" y="641.68" font-size="4.4" fill="#00ffff" text-anchor="middle" font-weight="bold" font-style="italic" stroke="#00ffff" stroke-width="0.5">4</text>
<text x="883.65" y="641.68" font-size="4.8" fill="#00ffff" text-anchor="middle" font-weight="bold" font-style="italic" stroke="#00ffff" stroke-width="0.5" textLength="18.5" lengthAdjust="spacingAndGlyphs">WK/C04-04</text>
<text x="919.25" y="641.68" font-size="4.8" fill="#00ffff" text-anchor="middle" font-weight="bold" font-style="normal" stroke="#00ffff" stroke-width="0.5" textLength="11.2" lengthAdjust="spacingAndGlyphs">固定板</text>
<text x="941.15" y="641.68" font-size="4.4" fill="#00ffff" text-anchor="middle" font-weight="bold" font-style="italic" stroke="#00ffff" stroke-width="0.5">1</text>
<text x="960.5" y="641.68" font-size="4.8" fill="#00ffff" text-anchor="middle" font-weight="bold" font-style="italic" stroke="#00ffff" stroke-width="0.5" textLength="5.2" lengthAdjust="spacingAndGlyphs">45</text>
<text x="996" y="641.68" font-size="4.9" fill="#00ffff" text-anchor="start" font-weight="bold" font-style="italic" stroke="#00ffff" stroke-width="0.5" textLength="16.3" lengthAdjust="spacingAndGlyphs">43~48HRC</text>
<text x="862.9" y="647.62" font-size="4.4" fill="#00ffff" text-anchor="middle" font-weight="bold" font-style="italic" stroke="#00ffff" stroke-width="0.5">3</text>
<text x="883.65" y="647.62" font-size="4.8" fill="#00ffff" text-anchor="middle" font-weight="bold" font-style="italic" stroke="#00ffff" stroke-width="0.5" textLength="18.5" lengthAdjust="spacingAndGlyphs">WK/C04-03</text>
<text x="919.25" y="647.62" font-size="4.8" fill="#00ffff" text-anchor="middle" font-weight="bold" font-style="normal" stroke="#00ffff" stroke-width="0.5" textLength="7.8" lengthAdjust="spacingAndGlyphs">压板</text>
<text x="941.15" y="647.62" font-size="4.4" fill="#00ffff" text-anchor="middle" font-weight="bold" font-style="italic" stroke="#00ffff" stroke-width="0.5">2</text>
<text x="960.5" y="647.62" font-size="4.8" fill="#00ffff" text-anchor="middle" font-weight="bold" font-style="italic" stroke="#00ffff" stroke-width="0.5" textLength="5.2" lengthAdjust="spacingAndGlyphs">45</text>
<text x="996" y="647.62" font-size="4.9" fill="#00ffff" text-anchor="start" font-weight="bold" font-style="italic" stroke="#00ffff" stroke-width="0.5" textLength="16.3" lengthAdjust="spacingAndGlyphs">43~48HRC</text>
<text x="862.9" y="653.56" font-size="4.4" fill="#00ffff" text-anchor="middle" font-weight="bold" font-style="italic" stroke="#00ffff" stroke-width="0.5">2</text>
<text x="883.65" y="653.56" font-size="4.8" fill="#00ffff" text-anchor="middle" font-weight="bold" font-style="italic" stroke="#00ffff" stroke-width="0.5" textLength="18.5" lengthAdjust="spacingAndGlyphs">WK/C04-02</text>
<text x="919.25" y="653.56" font-size="4.8" fill="#00ffff" text-anchor="middle" font-weight="bold" font-style="normal" stroke="#00ffff" stroke-width="0.5" textLength="7.8" lengthAdjust="spacingAndGlyphs">支架</text>
<text x="941.15" y="653.56" font-size="4.4" fill="#00ffff" text-anchor="middle" font-weight="bold" font-style="italic" stroke="#00ffff" stroke-width="0.5">2</text>
<text x="960.5" y="653.56" font-size="4.8" fill="#00ffff" text-anchor="middle" font-weight="bold" font-style="italic" stroke="#00ffff" stroke-width="0.5" textLength="5.2" lengthAdjust="spacingAndGlyphs">45</text>
<text x="996" y="653.56" font-size="4.9" fill="#00ffff" text-anchor="start" font-weight="bold" font-style="italic" stroke="#00ffff" stroke-width="0.5" textLength="16.3" lengthAdjust="spacingAndGlyphs">43~48HRC</text>
<text x="862.9" y="659.5" font-size="4.4" fill="#00ffff" text-anchor="middle" font-weight="bold" font-style="italic" stroke="#00ffff" stroke-width="0.5">1</text>
<text x="883.65" y="659.5" font-size="4.8" fill="#00ffff" text-anchor="middle" font-weight="bold" font-style="italic" stroke="#00ffff" stroke-width="0.5" textLength="18.5" lengthAdjust="spacingAndGlyphs">WK/C04-01</text>
<text x="919.25" y="659.5" font-size="4.8" fill="#00ffff" text-anchor="middle" font-weight="bold" font-style="normal" stroke="#00ffff" stroke-width="0.5" textLength="7.8" lengthAdjust="spacingAndGlyphs">底板</text>
<text x="941.15" y="659.5" font-size="4.4" fill="#00ffff" text-anchor="middle" font-weight="bold" font-style="italic" stroke="#00ffff" stroke-width="0.5">1</text>
<text x="960.5" y="659.5" font-size="4.8" fill="#00ffff" text-anchor="middle" font-weight="bold" font-style="italic" stroke="#00ffff" stroke-width="0.5" textLength="5.2" lengthAdjust="spacingAndGlyphs">45</text>
<line x1="859.5" y1="482.24" x2="1012.7" y2="482.24" stroke="#ffffff" stroke-width="1"/>
<line x1="859.5" y1="488.18" x2="1012.7" y2="488.18" stroke="#ffffff" stroke-width="1"/>
<line x1="859.5" y1="494.12" x2="1012.7" y2="494.12" stroke="#ffffff" stroke-width="1"/>
<line x1="859.5" y1="500.05" x2="1012.7" y2="500.05" stroke="#ffffff" stroke-width="1"/>
<line x1="859.5" y1="505.99" x2="1012.7" y2="505.99" stroke="#ffffff" stroke-width="1"/>
<line x1="859.5" y1="511.93" x2="1012.7" y2="511.93" stroke="#ffffff" stroke-width="1"/>
<line x1="859.5" y1="517.87" x2="1012.7" y2="517.87" stroke="#ffffff" stroke-width="1"/>
<line x1="859.5" y1="523.81" x2="1012.7" y2="523.81" stroke="#ffffff" stroke-width="1"/>
<line x1="859.5" y1="529.75" x2="1012.7" y2="529.75" stroke="#ffffff" stroke-width="1"/>
<line x1="859.5" y1="535.69" x2="1012.7" y2="535.69" stroke="#ffffff" stroke-width="1"/>
<line x1="859.5" y1="541.63" x2="1012.7" y2="541.63" stroke="#ffffff" stroke-width="1"/>
<line x1="859.5" y1="547.56" x2="1012.7" y2="547.56" stroke="#ffffff" stroke-width="1"/>
<line x1="859.5" y1="553.5" x2="1012.7" y2="553.5" stroke="#ffffff" stroke-width="1"/>
<line x1="859.5" y1="559.44" x2="1012.7" y2="559.44" stroke="#ffffff" stroke-width="1"/>
<line x1="859.5" y1="565.38" x2="1012.7" y2="565.38" stroke="#ffffff" stroke-width="1"/>
<line x1="859.5" y1="571.32" x2="1012.7" y2="571.32" stroke="#ffffff" stroke-width="1"/>
<line x1="859.5" y1="577.26" x2="1012.7" y2="577.26" stroke="#ffffff" stroke-width="1"/>
<line x1="859.5" y1="583.2" x2="1012.7" y2="583.2" stroke="#ffffff" stroke-width="1"/>
<line x1="859.5" y1="589.14" x2="1012.7" y2="589.14" stroke="#ffffff" stroke-width="1"/>
<line x1="859.5" y1="595.07" x2="1012.7" y2="595.07" stroke="#ffffff" stroke-width="1"/>
<line x1="859.5" y1="601.01" x2="1012.7" y2="601.01" stroke="#ffffff" stroke-width="1"/>
<line x1="859.5" y1="606.95" x2="1012.7" y2="606.95" stroke="#ffffff" stroke-width="1"/>
<line x1="859.5" y1="612.89" x2="1012.7" y2="612.89" stroke="#ffffff" stroke-width="1"/>
<line x1="859.5" y1="618.83" x2="1012.7" y2="618.83" stroke="#ffffff" stroke-width="1"/>
<line x1="859.5" y1="624.77" x2="1012.7" y2="624.77" stroke="#ffffff" stroke-width="1"/>
<line x1="859.5" y1="630.71" x2="1012.7" y2="630.71" stroke="#ffffff" stroke-width="1"/>
<line x1="859.5" y1="636.65" x2="1012.7" y2="636.65" stroke="#ffffff" stroke-width="1"/>
<line x1="859.5" y1="642.58" x2="1012.7" y2="642.58" stroke="#ffffff" stroke-width="1"/>
<line x1="859.5" y1="648.52" x2="1012.7" y2="648.52" stroke="#ffffff" stroke-width="1"/>
<line x1="859.5" y1="654.46" x2="1012.7" y2="654.46" stroke="#ffffff" stroke-width="1"/>
<line x1="859.5" y1="476.3" x2="859.5" y2="672.2" stroke="#00ff00" stroke-width="1"/>
<line x1="866.3" y1="476.3" x2="866.3" y2="672.2" stroke="#00ff00" stroke-width="1"/>
<line x1="900.6" y1="476.3" x2="900.6" y2="672.2" stroke="#00ff00" stroke-width="1"/>
<line x1="937.9" y1="476.3" x2="937.9" y2="672.2" stroke="#00ff00" stroke-width="1"/>
<line x1="944.4" y1="476.3" x2="944.4" y2="672.2" stroke="#00ff00" stroke-width="1"/>
<line x1="976.6" y1="476.3" x2="976.6" y2="672.2" stroke="#00ff00" stroke-width="1"/>
<line x1="985.6" y1="476.3" x2="985.6" y2="672.2" stroke="#00ff00" stroke-width="1"/>
<line x1="995.5" y1="476.3" x2="995.5" y2="672.2" stroke="#00ff00" stroke-width="1"/>
<line x1="1012.7" y1="476.3" x2="1012.7" y2="672.2" stroke="#00ff00" stroke-width="1"/>
<line x1="859.5" y1="672.2" x2="859.5" y2="719.5" stroke="#00ff00" stroke-width="1"/>
<line x1="859.5" y1="476.3" x2="1012.7" y2="476.3" stroke="#00ff00" stroke-width="1"/>
<line x1="859.5" y1="660.4" x2="1012.7" y2="660.4" stroke="#00ff00" stroke-width="1"/>
<line x1="859.5" y1="672.2" x2="1012.7" y2="672.2" stroke="#00ff00" stroke-width="1"/>
<text x="862.9" y="666.7" font-size="3.6" fill="#00ffff" text-anchor="middle" font-weight="bold" font-style="normal" stroke="#00ffff" stroke-width="0.5">序</text>
<text x="862.9" y="670.9" font-size="3.6" fill="#00ffff" text-anchor="middle" font-weight="bold" font-style="normal" stroke="#00ffff" stroke-width="0.5">号</text>
<text x="883.45" y="668.7" font-size="3.6" fill="#00ffff" text-anchor="middle" font-weight="bold" font-style="normal" stroke="#00ffff" stroke-width="0.5" textLength="4.6" lengthAdjust="spacingAndGlyphs">代号</text>
<text x="919.25" y="668.7" font-size="3.6" fill="#00ffff" text-anchor="middle" font-weight="bold" font-style="normal" stroke="#00ffff" stroke-width="0.5" textLength="5.4" lengthAdjust="spacingAndGlyphs">名称</text>
<text x="941.15" y="666.7" font-size="3.6" fill="#00ffff" text-anchor="middle" font-weight="bold" font-style="normal" stroke="#00ffff" stroke-width="0.5">数</text>
<text x="941.15" y="670.9" font-size="3.6" fill="#00ffff" text-anchor="middle" font-weight="bold" font-style="normal" stroke="#00ffff" stroke-width="0.5">量</text>
<text x="960.5" y="668.7" font-size="3.6" fill="#00ffff" text-anchor="middle" font-weight="bold" font-style="normal" stroke="#00ffff" stroke-width="0.5" textLength="4.6" lengthAdjust="spacingAndGlyphs">材料</text>
<text x="981.1" y="665.6" font-size="3.8" fill="#00ffff" text-anchor="middle" font-weight="bold" font-style="normal" stroke="#00ffff" stroke-width="0.5">单件</text>
<text x="990.55" y="665.6" font-size="3.8" fill="#00ffff" text-anchor="middle" font-weight="bold" font-style="normal" stroke="#00ffff" stroke-width="0.5">总计</text>
<text x="986.05" y="671" font-size="3.8" fill="#00ffff" text-anchor="middle" font-weight="bold" font-style="normal" stroke="#00ffff" stroke-width="0.5">重量</text>
<line x1="976.6" y1="666.4" x2="995.5" y2="666.4" stroke="#00ffff" stroke-width="1"/>
<text x="1004.1" y="668.7" font-size="3.6" fill="#00ffff" text-anchor="middle" font-weight="bold" font-style="normal" stroke="#00ffff" stroke-width="0.5" textLength="6" lengthAdjust="spacingAndGlyphs">备注</text>
<line x1="927.7" y1="672.2" x2="927.7" y2="719.5" stroke="#00ff00" stroke-width="1"/>
<line x1="969.7" y1="672.2" x2="969.7" y2="719.5" stroke="#00ff00" stroke-width="1"/>
<line x1="859.5" y1="696.2" x2="969.7" y2="696.2" stroke="#00ff00" stroke-width="1"/>
<line x1="969.7" y1="687.6" x2="1012.7" y2="687.6" stroke="#00ff00" stroke-width="1"/>
<line x1="969.7" y1="704.5" x2="1012.7" y2="704.5" stroke="#00ff00" stroke-width="1"/>
<line x1="859.5" y1="678.8" x2="927.7" y2="678.8" stroke="#00ffff" stroke-width="1"/>
<line x1="859.5" y1="684.7" x2="927.7" y2="684.7" stroke="#00ffff" stroke-width="1"/>
<line x1="859.5" y1="690.3" x2="927.7" y2="690.3" stroke="#00ffff" stroke-width="1"/>
<line x1="859.5" y1="702.2" x2="927.7" y2="702.2" stroke="#00ffff" stroke-width="1"/>
<line x1="859.5" y1="708.2" x2="927.7" y2="708.2" stroke="#00ffff" stroke-width="1"/>
<line x1="859.5" y1="713.8" x2="927.7" y2="713.8" stroke="#00ffff" stroke-width="1"/>
<line x1="867.4" y1="672.2" x2="867.4" y2="696.2" stroke="#00ffff" stroke-width="1"/>
<line x1="876.4" y1="672.2" x2="876.4" y2="696.2" stroke="#00ffff" stroke-width="1"/>
<line x1="889.5" y1="672.2" x2="889.5" y2="696.2" stroke="#00ffff" stroke-width="1"/>
<line x1="903.4" y1="672.2" x2="903.4" y2="696.2" stroke="#00ffff" stroke-width="1"/>
<line x1="913.8" y1="672.2" x2="913.8" y2="696.2" stroke="#00ffff" stroke-width="1"/>
<line x1="870" y1="696.2" x2="870" y2="719.5" stroke="#00ffff" stroke-width="1"/>
<line x1="879.6" y1="696.2" x2="879.6" y2="719.5" stroke="#00ffff" stroke-width="1"/>
<line x1="897.9" y1="696.2" x2="897.9" y2="719.5" stroke="#00ffff" stroke-width="1"/>
<line x1="902.6" y1="696.2" x2="902.6" y2="719.5" stroke="#00ffff" stroke-width="1"/>
<line x1="913.8" y1="696.2" x2="913.8" y2="719.5" stroke="#00ffff" stroke-width="1"/>
<text x="863.4" y="695.2" font-size="3.6" fill="#00ffff" text-anchor="middle" font-weight="bold" font-style="normal" stroke="#00ffff" stroke-width="0.5" textLength="6.5" lengthAdjust="spacingAndGlyphs">标记</text>
<text x="872" y="695.2" font-size="3.6" fill="#00ffff" text-anchor="middle" font-weight="bold" font-style="normal" stroke="#00ffff" stroke-width="0.5" textLength="7" lengthAdjust="spacingAndGlyphs">处数</text>
<text x="883" y="695.2" font-size="3.6" fill="#00ffff" text-anchor="middle" font-weight="bold" font-style="normal" stroke="#00ffff" stroke-width="0.5" textLength="6" lengthAdjust="spacingAndGlyphs">分区</text>
<text x="896.5" y="695.2" font-size="3.4" fill="#00ffff" text-anchor="middle" font-weight="bold" font-style="normal" stroke="#00ffff" stroke-width="0.5" textLength="12" lengthAdjust="spacingAndGlyphs">更改文件号</text>
<text x="908.6" y="695.2" font-size="3.6" fill="#00ffff" text-anchor="middle" font-weight="bold" font-style="normal" stroke="#00ffff" stroke-width="0.5" textLength="7" lengthAdjust="spacingAndGlyphs">签名</text>
<text x="920.5" y="695.2" font-size="3.6" fill="#00ffff" text-anchor="middle" font-weight="bold" font-style="normal" stroke="#00ffff" stroke-width="0.5" textLength="8" lengthAdjust="spacingAndGlyphs">日期</text>
<text x="864.6" y="701.3" font-size="3.6" fill="#00ffff" text-anchor="middle" font-weight="bold" font-style="normal" stroke="#00ffff" stroke-width="0.5" textLength="7" lengthAdjust="spacingAndGlyphs">设计</text>
<text x="884" y="701.3" font-size="3.8" fill="#00ffff" text-anchor="middle" font-weight="bold" font-style="italic" stroke="#00ffff" stroke-width="0.5" textLength="17" lengthAdjust="spacingAndGlyphs">2013-06-02</text>
<text x="900.2" y="701.3" font-size="3.4" fill="#00ffff" text-anchor="middle" font-weight="bold" font-style="normal" stroke="#00ffff" stroke-width="0.5" textLength="4.4" lengthAdjust="spacingAndGlyphs">标准化</text>
<text x="864.6" y="713" font-size="3.6" fill="#00ffff" text-anchor="middle" font-weight="bold" font-style="normal" stroke="#00ffff" stroke-width="0.5" textLength="7" lengthAdjust="spacingAndGlyphs">审核</text>
<text x="864.6" y="718.6" font-size="3.6" fill="#00ffff" text-anchor="middle" font-weight="bold" font-style="normal" stroke="#00ffff" stroke-width="0.5" textLength="7" lengthAdjust="spacingAndGlyphs">工艺</text>
<text x="900.2" y="707.4" font-size="3.4" fill="#00ffff" text-anchor="middle" font-weight="bold" font-style="normal" stroke="#00ffff" stroke-width="0.5">审</text>
<text x="900.2" y="713" font-size="3.4" fill="#00ffff" text-anchor="middle" font-weight="bold" font-style="normal" stroke="#00ffff" stroke-width="0.5">批</text>
<text x="900.2" y="718.6" font-size="3.4" fill="#00ffff" text-anchor="middle" font-weight="bold" font-style="normal" stroke="#00ffff" stroke-width="0.5">准</text>
<text x="908.3" y="707.2" font-size="4" fill="#00ffff" text-anchor="middle" font-weight="bold" font-style="italic" stroke="#00ffff" stroke-width="0.5" textLength="6" lengthAdjust="spacingAndGlyphs">WK</text>
<line x1="903.5" y1="710.5" x2="912" y2="710.5" stroke="#00ffff" stroke-width="1"/>
<line x1="903.5" y1="705.8" x2="912" y2="705.8" stroke="#00ffff" stroke-width="1"/>
<text x="948.7" y="687" font-size="7.2" fill="#00ffff" text-anchor="middle" font-weight="normal" font-style="italic" stroke="#00ffff" stroke-width="0.3" textLength="19" lengthAdjust="spacingAndGlyphs">J23-30</text>
<line x1="927.7" y1="704.2" x2="969.7" y2="704.2" stroke="#00ffff" stroke-width="1"/>
<line x1="927.7" y1="712.2" x2="969.7" y2="712.2" stroke="#00ffff" stroke-width="1"/>
<line x1="949.5" y1="696.2" x2="949.5" y2="712.2" stroke="#00ffff" stroke-width="1"/>
<line x1="959" y1="696.2" x2="959" y2="712.2" stroke="#00ffff" stroke-width="1"/>
<line x1="932.8" y1="704.2" x2="932.8" y2="712.2" stroke="#00ffff" stroke-width="1"/>
<line x1="937.5" y1="704.2" x2="937.5" y2="712.2" stroke="#00ffff" stroke-width="1"/>
<line x1="942.3" y1="704.2" x2="942.3" y2="712.2" stroke="#00ffff" stroke-width="1"/>
<line x1="947" y1="704.2" x2="947" y2="712.2" stroke="#00ffff" stroke-width="1"/>
<text x="938.5" y="703" font-size="3.8" fill="#00ffff" text-anchor="middle" font-weight="bold" font-style="normal" stroke="#00ffff" stroke-width="0.5" textLength="11" lengthAdjust="spacingAndGlyphs">阶段标记</text>
<text x="954.2" y="703" font-size="3.6" fill="#00ffff" text-anchor="middle" font-weight="bold" font-style="normal" stroke="#00ffff" stroke-width="0.5" textLength="5" lengthAdjust="spacingAndGlyphs">重量</text>
<text x="964.3" y="703" font-size="3.6" fill="#00ffff" text-anchor="middle" font-weight="bold" font-style="normal" stroke="#00ffff" stroke-width="0.5" textLength="6" lengthAdjust="spacingAndGlyphs">比例</text>
<text x="964.3" y="710.8" font-size="3.8" fill="#00ffff" text-anchor="middle" font-weight="bold" font-style="italic" stroke="#00ffff" stroke-width="0.5" textLength="5" lengthAdjust="spacingAndGlyphs">1:1</text>
<text x="938.5" y="718.6" font-size="3.8" fill="#00ffff" text-anchor="middle" font-weight="bold" font-style="normal" stroke="#00ffff" stroke-width="0.5" textLength="11" lengthAdjust="spacingAndGlyphs">共 1 张</text>
<text x="957" y="718.6" font-size="3.8" fill="#00ffff" text-anchor="middle" font-weight="bold" font-style="normal" stroke="#00ffff" stroke-width="0.5" textLength="11" lengthAdjust="spacingAndGlyphs">第 1 张</text>
<text x="991.3" y="685" font-size="8.6" fill="#00ffff" text-anchor="middle" font-weight="bold" font-style="normal" stroke="#00ffff" stroke-width="0.45" textLength="26" lengthAdjust="spacingAndGlyphs">理工学院</text>
<text x="991" y="698.6" font-size="5.4" fill="#00ffff" text-anchor="middle" font-weight="bold" font-style="normal" stroke="#00ffff" stroke-width="0.4" textLength="40.5" lengthAdjust="spacingAndGlyphs">接线片 冲孔落料 级进模</text>
<text x="991.5" y="716.6" font-size="8.6" fill="#00ffff" text-anchor="middle" font-weight="normal" font-style="italic" stroke="#00ffff" stroke-width="0.35" textLength="35" lengthAdjust="spacingAndGlyphs">WK/C04-01</text>
<text x="664.3" y="540.8" font-size="4.6" fill="#00ffff" text-anchor="start" font-weight="bold" font-style="normal" stroke="#00ffff" stroke-width="0.4" textLength="9" lengthAdjust="spacingAndGlyphs">技术要求</text>
<text x="622.3" y="552.6" font-size="5" fill="#00ffff" text-anchor="start" font-weight="bold" font-style="normal" stroke="#00ffff" stroke-width="0.4" textLength="95" lengthAdjust="spacingAndGlyphs">1.模具闭合高度为220mm，选用J23-30型开式压力机。</text>
<text x="622.3" y="559.4" font-size="5" fill="#00ffff" text-anchor="start" font-weight="bold" font-style="normal" stroke="#00ffff" stroke-width="0.4" textLength="113" lengthAdjust="spacingAndGlyphs">2.凸、凹模刃口间隙应均匀，双面间隙Zmin=0.10mm，Zmax=0.14mm，不得有毛刺。</text>
<text x="622.3" y="566.2" font-size="5" fill="#00ffff" text-anchor="start" font-weight="bold" font-style="normal" stroke="#00ffff" stroke-width="0.4" textLength="48" lengthAdjust="spacingAndGlyphs">3.装配后导柱与导套应滑动灵活无阻滞。</text>
<text x="622.3" y="573" font-size="5" fill="#00ffff" text-anchor="start" font-weight="bold" font-style="normal" stroke="#00ffff" stroke-width="0.4" textLength="43" lengthAdjust="spacingAndGlyphs">4.卸料板与凸模配合间隙按H7/h6。</text>
<text x="622.3" y="579.8" font-size="5" fill="#00ffff" text-anchor="start" font-weight="bold" font-style="normal" stroke="#00ffff" stroke-width="0.4" textLength="51" lengthAdjust="spacingAndGlyphs">5.上、下模座平行度不大于0.05mm。</text>
<text x="622.3" y="586.6" font-size="5" fill="#00ffff" text-anchor="start" font-weight="bold" font-style="normal" stroke="#00ffff" stroke-width="0.4" textLength="60" lengthAdjust="spacingAndGlyphs">6.条料宽度48mm，步距20mm，采用侧刃定距。</text>
<text x="622.3" y="593.4" font-size="5" fill="#00ffff" text-anchor="start" font-weight="bold" font-style="normal" stroke="#00ffff" stroke-width="0.4" textLength="34" lengthAdjust="spacingAndGlyphs">7.未注倒角C1，锐边倒钝。</text>
<text x="21.9" y="663.9" font-size="3.6" fill="#00ffff" text-anchor="middle" font-weight="bold" font-style="normal" stroke="#00ffff" stroke-width="0.3" textLength="15.5" lengthAdjust="spacingAndGlyphs">借(通)用件</text>
<text x="21.9" y="667.9" font-size="3.6" fill="#00ffff" text-anchor="middle" font-weight="bold" font-style="normal" stroke="#00ffff" stroke-width="0.3" textLength="9.5" lengthAdjust="spacingAndGlyphs">登记</text>
<text x="21.9" y="685.6" font-size="4" fill="#00ffff" text-anchor="middle" font-weight="bold" font-style="normal" stroke="#00ffff" stroke-width="0.3" textLength="8" lengthAdjust="spacingAndGlyphs">旧底图</text>
<text x="21.9" y="691" font-size="3.6" fill="#00ffff" text-anchor="middle" font-weight="bold" font-style="normal" stroke="#00ffff" stroke-width="0.3" textLength="4" lengthAdjust="spacingAndGlyphs">总号</text>
<text x="21.9" y="702" font-size="3.6" fill="#00ffff" text-anchor="middle" font-weight="bold" font-style="normal" stroke="#00ffff" stroke-width="0.3" textLength="4" lengthAdjust="spacingAndGlyphs">底图</text>
<text x="21.9" y="713" font-size="3.6" fill="#00ffff" text-anchor="middle" font-weight="bold" font-style="normal" stroke="#00ffff" stroke-width="0.3" textLength="4" lengthAdjust="spacingAndGlyphs">签字</text>
</svg>
<div id="tb">
<div style="left:0;width:60px"></div>
<div style="left:91px;width:100px"></div>
<div style="left:207px;width:151px"><span style="left:8px">Ξ η</span></div>
<div style="left:365px;width:158px"><span style="left:56px">ByLayer</span></div>
<div style="left:531px;width:122px"><span style="left:44px">默认</span></div>
<div style="left:661px;width:101px;background:#ececec;border-left:1px solid #aaa;border-bottom:1px solid #aaa;height:6px"><span style="left:8px;color:#666">随颜色</span></div>
<div style="left:762px;width:18px;border-right:1px solid #aaa;border-bottom:1px solid #aaa;height:6px"></div>
<i style="position:absolute;left:70px;top:0;width:13px;height:3px;background:#4a6ea8"></i><i style="position:absolute;left:72px;top:0;width:2px;height:2px;background:#dfe8f5"></i><i style="position:absolute;left:76px;top:0;width:2px;height:2px;background:#dfe8f5"></i><i style="position:absolute;left:80px;top:0;width:2px;height:2px;background:#dfe8f5"></i>
<i style="position:absolute;left:63px;top:0;width:1px;height:5px;background:#888"></i>
<i style="position:absolute;left:195px;top:0;width:1px;height:6px;background:#999"></i>
<i style="position:absolute;left:200px;top:0;width:1px;height:6px;background:#999"></i>
<i style="position:absolute;left:361px;top:0;width:1px;height:6px;background:#999"></i>
<i style="position:absolute;left:526px;top:0;width:1px;height:6px;background:#999"></i>
<i style="position:absolute;left:656px;top:0;width:1px;height:6px;background:#999"></i>
</div>
</body></html>
